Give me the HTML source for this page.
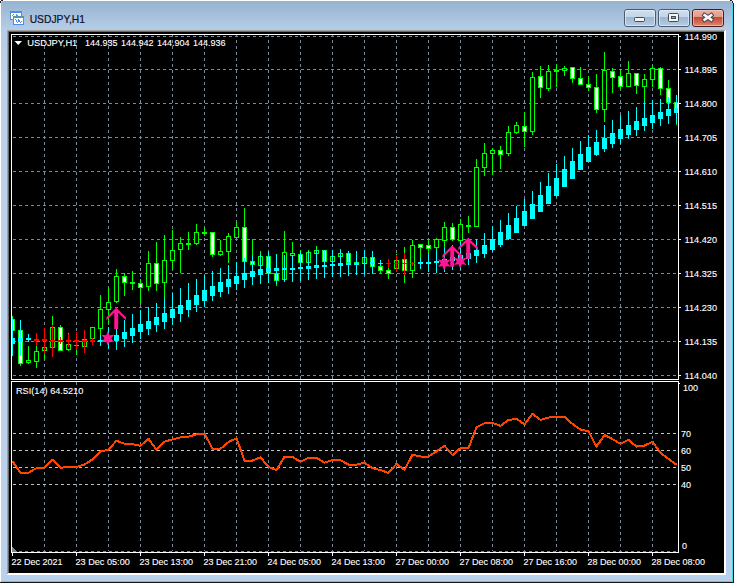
<!DOCTYPE html>
<html><head><meta charset="utf-8"><style>
html,body{margin:0;padding:0;width:736px;height:583px;overflow:hidden;background:#fff;}
svg{display:block;}
</style></head><body>
<svg width="736" height="583" viewBox="0 0 736 583" shape-rendering="crispEdges">
<defs>
<linearGradient id="gbg" x1="0" y1="1" x2="0" y2="70" gradientUnits="userSpaceOnUse">
<stop offset="0" stop-color="#98b3d0"/><stop offset="0.4" stop-color="#b4cce6"/><stop offset="1" stop-color="#b9d1ea"/>
</linearGradient>
<linearGradient id="gmin" x1="0" y1="0" x2="0" y2="1">
<stop offset="0" stop-color="#d2e0ef"/><stop offset="0.45" stop-color="#c3d5e9"/><stop offset="0.46" stop-color="#9db6d1"/><stop offset="1" stop-color="#b7cde6"/>
</linearGradient>
<linearGradient id="gclose" x1="0" y1="0" x2="0" y2="1">
<stop offset="0" stop-color="#eeb1a3"/><stop offset="0.45" stop-color="#e39a88"/><stop offset="0.46" stop-color="#c4492d"/><stop offset="1" stop-color="#dc8a74"/>
</linearGradient>
<clipPath id="cmain"><rect x="12" y="35" width="666" height="344"/></clipPath>
<clipPath id="crsi"><rect x="12" y="382" width="666" height="170"/></clipPath>
</defs>
<rect x="0" y="0" width="736" height="583" fill="#ffffff"/>
<rect x="1" y="1" width="731" height="581" fill="url(#gbg)"/>
<rect x="732" y="3" width="1" height="579" fill="#3fd6f2"/>
<rect x="1" y="581" width="732" height="1" fill="#3fd6f2"/>
<rect x="733" y="3" width="1" height="580" fill="#141414"/>
<rect x="0" y="582" width="734" height="1" fill="#141414"/>
<rect x="0" y="1" width="1" height="2" fill="#222"/>
<rect x="1" y="0" width="2" height="1" fill="#222"/>
<rect x="1" y="1" width="1" height="1" fill="#e8f0f8"/>
<rect x="730" y="0" width="2" height="1" fill="#222"/>
<rect x="732" y="1" width="1" height="2" fill="#222"/>
<rect x="731" y="1" width="1" height="1" fill="#c8f0ff"/>
<!-- sunken border -->
<rect x="7" y="30" width="719" height="545" fill="#ffffff"/>
<rect x="7" y="30" width="718" height="1" fill="#a0a0a0"/>
<rect x="7" y="30" width="1" height="544" fill="#a0a0a0"/>
<rect x="8" y="31" width="716" height="1" fill="#696969"/>
<rect x="8" y="31" width="1" height="542" fill="#696969"/>
<rect x="9" y="32" width="715" height="541" fill="#000"/>
<path d="M13 36h3v1h-3zM19 36h3v1h-3zM25 36h3v1h-3zM31 36h3v1h-3zM37 36h3v1h-3zM43 36h3v1h-3zM49 36h3v1h-3zM55 36h3v1h-3zM61 36h3v1h-3zM67 36h3v1h-3zM73 36h3v1h-3zM79 36h3v1h-3zM85 36h3v1h-3zM91 36h3v1h-3zM97 36h3v1h-3zM103 36h3v1h-3zM109 36h3v1h-3zM115 36h3v1h-3zM121 36h3v1h-3zM127 36h3v1h-3zM133 36h3v1h-3zM139 36h3v1h-3zM145 36h3v1h-3zM151 36h3v1h-3zM157 36h3v1h-3zM163 36h3v1h-3zM169 36h3v1h-3zM175 36h3v1h-3zM181 36h3v1h-3zM187 36h3v1h-3zM193 36h3v1h-3zM199 36h3v1h-3zM205 36h3v1h-3zM211 36h3v1h-3zM217 36h3v1h-3zM223 36h3v1h-3zM229 36h3v1h-3zM235 36h3v1h-3zM241 36h3v1h-3zM247 36h3v1h-3zM253 36h3v1h-3zM259 36h3v1h-3zM265 36h3v1h-3zM271 36h3v1h-3zM277 36h3v1h-3zM283 36h3v1h-3zM289 36h3v1h-3zM295 36h3v1h-3zM301 36h3v1h-3zM307 36h3v1h-3zM313 36h3v1h-3zM319 36h3v1h-3zM325 36h3v1h-3zM331 36h3v1h-3zM337 36h3v1h-3zM343 36h3v1h-3zM349 36h3v1h-3zM355 36h3v1h-3zM361 36h3v1h-3zM367 36h3v1h-3zM373 36h3v1h-3zM379 36h3v1h-3zM385 36h3v1h-3zM391 36h3v1h-3zM397 36h3v1h-3zM403 36h3v1h-3zM409 36h3v1h-3zM415 36h3v1h-3zM421 36h3v1h-3zM427 36h3v1h-3zM433 36h3v1h-3zM439 36h3v1h-3zM445 36h3v1h-3zM451 36h3v1h-3zM457 36h3v1h-3zM463 36h3v1h-3zM469 36h3v1h-3zM475 36h3v1h-3zM481 36h3v1h-3zM487 36h3v1h-3zM493 36h3v1h-3zM499 36h3v1h-3zM505 36h3v1h-3zM511 36h3v1h-3zM517 36h3v1h-3zM523 36h3v1h-3zM529 36h3v1h-3zM535 36h3v1h-3zM541 36h3v1h-3zM547 36h3v1h-3zM553 36h3v1h-3zM559 36h3v1h-3zM565 36h3v1h-3zM571 36h3v1h-3zM577 36h3v1h-3zM583 36h3v1h-3zM589 36h3v1h-3zM595 36h3v1h-3zM601 36h3v1h-3zM607 36h3v1h-3zM613 36h3v1h-3zM619 36h3v1h-3zM625 36h3v1h-3zM631 36h3v1h-3zM637 36h3v1h-3zM643 36h3v1h-3zM649 36h3v1h-3zM655 36h3v1h-3zM661 36h3v1h-3zM667 36h3v1h-3zM673 36h3v1h-3zM13 69h3v1h-3zM19 69h3v1h-3zM25 69h3v1h-3zM31 69h3v1h-3zM37 69h3v1h-3zM43 69h3v1h-3zM49 69h3v1h-3zM55 69h3v1h-3zM61 69h3v1h-3zM67 69h3v1h-3zM73 69h3v1h-3zM79 69h3v1h-3zM85 69h3v1h-3zM91 69h3v1h-3zM97 69h3v1h-3zM103 69h3v1h-3zM109 69h3v1h-3zM115 69h3v1h-3zM121 69h3v1h-3zM127 69h3v1h-3zM133 69h3v1h-3zM139 69h3v1h-3zM145 69h3v1h-3zM151 69h3v1h-3zM157 69h3v1h-3zM163 69h3v1h-3zM169 69h3v1h-3zM175 69h3v1h-3zM181 69h3v1h-3zM187 69h3v1h-3zM193 69h3v1h-3zM199 69h3v1h-3zM205 69h3v1h-3zM211 69h3v1h-3zM217 69h3v1h-3zM223 69h3v1h-3zM229 69h3v1h-3zM235 69h3v1h-3zM241 69h3v1h-3zM247 69h3v1h-3zM253 69h3v1h-3zM259 69h3v1h-3zM265 69h3v1h-3zM271 69h3v1h-3zM277 69h3v1h-3zM283 69h3v1h-3zM289 69h3v1h-3zM295 69h3v1h-3zM301 69h3v1h-3zM307 69h3v1h-3zM313 69h3v1h-3zM319 69h3v1h-3zM325 69h3v1h-3zM331 69h3v1h-3zM337 69h3v1h-3zM343 69h3v1h-3zM349 69h3v1h-3zM355 69h3v1h-3zM361 69h3v1h-3zM367 69h3v1h-3zM373 69h3v1h-3zM379 69h3v1h-3zM385 69h3v1h-3zM391 69h3v1h-3zM397 69h3v1h-3zM403 69h3v1h-3zM409 69h3v1h-3zM415 69h3v1h-3zM421 69h3v1h-3zM427 69h3v1h-3zM433 69h3v1h-3zM439 69h3v1h-3zM445 69h3v1h-3zM451 69h3v1h-3zM457 69h3v1h-3zM463 69h3v1h-3zM469 69h3v1h-3zM475 69h3v1h-3zM481 69h3v1h-3zM487 69h3v1h-3zM493 69h3v1h-3zM499 69h3v1h-3zM505 69h3v1h-3zM511 69h3v1h-3zM517 69h3v1h-3zM523 69h3v1h-3zM529 69h3v1h-3zM535 69h3v1h-3zM541 69h3v1h-3zM547 69h3v1h-3zM553 69h3v1h-3zM559 69h3v1h-3zM565 69h3v1h-3zM571 69h3v1h-3zM577 69h3v1h-3zM583 69h3v1h-3zM589 69h3v1h-3zM595 69h3v1h-3zM601 69h3v1h-3zM607 69h3v1h-3zM613 69h3v1h-3zM619 69h3v1h-3zM625 69h3v1h-3zM631 69h3v1h-3zM637 69h3v1h-3zM643 69h3v1h-3zM649 69h3v1h-3zM655 69h3v1h-3zM661 69h3v1h-3zM667 69h3v1h-3zM673 69h3v1h-3zM13 103h3v1h-3zM19 103h3v1h-3zM25 103h3v1h-3zM31 103h3v1h-3zM37 103h3v1h-3zM43 103h3v1h-3zM49 103h3v1h-3zM55 103h3v1h-3zM61 103h3v1h-3zM67 103h3v1h-3zM73 103h3v1h-3zM79 103h3v1h-3zM85 103h3v1h-3zM91 103h3v1h-3zM97 103h3v1h-3zM103 103h3v1h-3zM109 103h3v1h-3zM115 103h3v1h-3zM121 103h3v1h-3zM127 103h3v1h-3zM133 103h3v1h-3zM139 103h3v1h-3zM145 103h3v1h-3zM151 103h3v1h-3zM157 103h3v1h-3zM163 103h3v1h-3zM169 103h3v1h-3zM175 103h3v1h-3zM181 103h3v1h-3zM187 103h3v1h-3zM193 103h3v1h-3zM199 103h3v1h-3zM205 103h3v1h-3zM211 103h3v1h-3zM217 103h3v1h-3zM223 103h3v1h-3zM229 103h3v1h-3zM235 103h3v1h-3zM241 103h3v1h-3zM247 103h3v1h-3zM253 103h3v1h-3zM259 103h3v1h-3zM265 103h3v1h-3zM271 103h3v1h-3zM277 103h3v1h-3zM283 103h3v1h-3zM289 103h3v1h-3zM295 103h3v1h-3zM301 103h3v1h-3zM307 103h3v1h-3zM313 103h3v1h-3zM319 103h3v1h-3zM325 103h3v1h-3zM331 103h3v1h-3zM337 103h3v1h-3zM343 103h3v1h-3zM349 103h3v1h-3zM355 103h3v1h-3zM361 103h3v1h-3zM367 103h3v1h-3zM373 103h3v1h-3zM379 103h3v1h-3zM385 103h3v1h-3zM391 103h3v1h-3zM397 103h3v1h-3zM403 103h3v1h-3zM409 103h3v1h-3zM415 103h3v1h-3zM421 103h3v1h-3zM427 103h3v1h-3zM433 103h3v1h-3zM439 103h3v1h-3zM445 103h3v1h-3zM451 103h3v1h-3zM457 103h3v1h-3zM463 103h3v1h-3zM469 103h3v1h-3zM475 103h3v1h-3zM481 103h3v1h-3zM487 103h3v1h-3zM493 103h3v1h-3zM499 103h3v1h-3zM505 103h3v1h-3zM511 103h3v1h-3zM517 103h3v1h-3zM523 103h3v1h-3zM529 103h3v1h-3zM535 103h3v1h-3zM541 103h3v1h-3zM547 103h3v1h-3zM553 103h3v1h-3zM559 103h3v1h-3zM565 103h3v1h-3zM571 103h3v1h-3zM577 103h3v1h-3zM583 103h3v1h-3zM589 103h3v1h-3zM595 103h3v1h-3zM601 103h3v1h-3zM607 103h3v1h-3zM613 103h3v1h-3zM619 103h3v1h-3zM625 103h3v1h-3zM631 103h3v1h-3zM637 103h3v1h-3zM643 103h3v1h-3zM649 103h3v1h-3zM655 103h3v1h-3zM661 103h3v1h-3zM667 103h3v1h-3zM673 103h3v1h-3zM13 137h3v1h-3zM19 137h3v1h-3zM25 137h3v1h-3zM31 137h3v1h-3zM37 137h3v1h-3zM43 137h3v1h-3zM49 137h3v1h-3zM55 137h3v1h-3zM61 137h3v1h-3zM67 137h3v1h-3zM73 137h3v1h-3zM79 137h3v1h-3zM85 137h3v1h-3zM91 137h3v1h-3zM97 137h3v1h-3zM103 137h3v1h-3zM109 137h3v1h-3zM115 137h3v1h-3zM121 137h3v1h-3zM127 137h3v1h-3zM133 137h3v1h-3zM139 137h3v1h-3zM145 137h3v1h-3zM151 137h3v1h-3zM157 137h3v1h-3zM163 137h3v1h-3zM169 137h3v1h-3zM175 137h3v1h-3zM181 137h3v1h-3zM187 137h3v1h-3zM193 137h3v1h-3zM199 137h3v1h-3zM205 137h3v1h-3zM211 137h3v1h-3zM217 137h3v1h-3zM223 137h3v1h-3zM229 137h3v1h-3zM235 137h3v1h-3zM241 137h3v1h-3zM247 137h3v1h-3zM253 137h3v1h-3zM259 137h3v1h-3zM265 137h3v1h-3zM271 137h3v1h-3zM277 137h3v1h-3zM283 137h3v1h-3zM289 137h3v1h-3zM295 137h3v1h-3zM301 137h3v1h-3zM307 137h3v1h-3zM313 137h3v1h-3zM319 137h3v1h-3zM325 137h3v1h-3zM331 137h3v1h-3zM337 137h3v1h-3zM343 137h3v1h-3zM349 137h3v1h-3zM355 137h3v1h-3zM361 137h3v1h-3zM367 137h3v1h-3zM373 137h3v1h-3zM379 137h3v1h-3zM385 137h3v1h-3zM391 137h3v1h-3zM397 137h3v1h-3zM403 137h3v1h-3zM409 137h3v1h-3zM415 137h3v1h-3zM421 137h3v1h-3zM427 137h3v1h-3zM433 137h3v1h-3zM439 137h3v1h-3zM445 137h3v1h-3zM451 137h3v1h-3zM457 137h3v1h-3zM463 137h3v1h-3zM469 137h3v1h-3zM475 137h3v1h-3zM481 137h3v1h-3zM487 137h3v1h-3zM493 137h3v1h-3zM499 137h3v1h-3zM505 137h3v1h-3zM511 137h3v1h-3zM517 137h3v1h-3zM523 137h3v1h-3zM529 137h3v1h-3zM535 137h3v1h-3zM541 137h3v1h-3zM547 137h3v1h-3zM553 137h3v1h-3zM559 137h3v1h-3zM565 137h3v1h-3zM571 137h3v1h-3zM577 137h3v1h-3zM583 137h3v1h-3zM589 137h3v1h-3zM595 137h3v1h-3zM601 137h3v1h-3zM607 137h3v1h-3zM613 137h3v1h-3zM619 137h3v1h-3zM625 137h3v1h-3zM631 137h3v1h-3zM637 137h3v1h-3zM643 137h3v1h-3zM649 137h3v1h-3zM655 137h3v1h-3zM661 137h3v1h-3zM667 137h3v1h-3zM673 137h3v1h-3zM13 171h3v1h-3zM19 171h3v1h-3zM25 171h3v1h-3zM31 171h3v1h-3zM37 171h3v1h-3zM43 171h3v1h-3zM49 171h3v1h-3zM55 171h3v1h-3zM61 171h3v1h-3zM67 171h3v1h-3zM73 171h3v1h-3zM79 171h3v1h-3zM85 171h3v1h-3zM91 171h3v1h-3zM97 171h3v1h-3zM103 171h3v1h-3zM109 171h3v1h-3zM115 171h3v1h-3zM121 171h3v1h-3zM127 171h3v1h-3zM133 171h3v1h-3zM139 171h3v1h-3zM145 171h3v1h-3zM151 171h3v1h-3zM157 171h3v1h-3zM163 171h3v1h-3zM169 171h3v1h-3zM175 171h3v1h-3zM181 171h3v1h-3zM187 171h3v1h-3zM193 171h3v1h-3zM199 171h3v1h-3zM205 171h3v1h-3zM211 171h3v1h-3zM217 171h3v1h-3zM223 171h3v1h-3zM229 171h3v1h-3zM235 171h3v1h-3zM241 171h3v1h-3zM247 171h3v1h-3zM253 171h3v1h-3zM259 171h3v1h-3zM265 171h3v1h-3zM271 171h3v1h-3zM277 171h3v1h-3zM283 171h3v1h-3zM289 171h3v1h-3zM295 171h3v1h-3zM301 171h3v1h-3zM307 171h3v1h-3zM313 171h3v1h-3zM319 171h3v1h-3zM325 171h3v1h-3zM331 171h3v1h-3zM337 171h3v1h-3zM343 171h3v1h-3zM349 171h3v1h-3zM355 171h3v1h-3zM361 171h3v1h-3zM367 171h3v1h-3zM373 171h3v1h-3zM379 171h3v1h-3zM385 171h3v1h-3zM391 171h3v1h-3zM397 171h3v1h-3zM403 171h3v1h-3zM409 171h3v1h-3zM415 171h3v1h-3zM421 171h3v1h-3zM427 171h3v1h-3zM433 171h3v1h-3zM439 171h3v1h-3zM445 171h3v1h-3zM451 171h3v1h-3zM457 171h3v1h-3zM463 171h3v1h-3zM469 171h3v1h-3zM475 171h3v1h-3zM481 171h3v1h-3zM487 171h3v1h-3zM493 171h3v1h-3zM499 171h3v1h-3zM505 171h3v1h-3zM511 171h3v1h-3zM517 171h3v1h-3zM523 171h3v1h-3zM529 171h3v1h-3zM535 171h3v1h-3zM541 171h3v1h-3zM547 171h3v1h-3zM553 171h3v1h-3zM559 171h3v1h-3zM565 171h3v1h-3zM571 171h3v1h-3zM577 171h3v1h-3zM583 171h3v1h-3zM589 171h3v1h-3zM595 171h3v1h-3zM601 171h3v1h-3zM607 171h3v1h-3zM613 171h3v1h-3zM619 171h3v1h-3zM625 171h3v1h-3zM631 171h3v1h-3zM637 171h3v1h-3zM643 171h3v1h-3zM649 171h3v1h-3zM655 171h3v1h-3zM661 171h3v1h-3zM667 171h3v1h-3zM673 171h3v1h-3zM13 205h3v1h-3zM19 205h3v1h-3zM25 205h3v1h-3zM31 205h3v1h-3zM37 205h3v1h-3zM43 205h3v1h-3zM49 205h3v1h-3zM55 205h3v1h-3zM61 205h3v1h-3zM67 205h3v1h-3zM73 205h3v1h-3zM79 205h3v1h-3zM85 205h3v1h-3zM91 205h3v1h-3zM97 205h3v1h-3zM103 205h3v1h-3zM109 205h3v1h-3zM115 205h3v1h-3zM121 205h3v1h-3zM127 205h3v1h-3zM133 205h3v1h-3zM139 205h3v1h-3zM145 205h3v1h-3zM151 205h3v1h-3zM157 205h3v1h-3zM163 205h3v1h-3zM169 205h3v1h-3zM175 205h3v1h-3zM181 205h3v1h-3zM187 205h3v1h-3zM193 205h3v1h-3zM199 205h3v1h-3zM205 205h3v1h-3zM211 205h3v1h-3zM217 205h3v1h-3zM223 205h3v1h-3zM229 205h3v1h-3zM235 205h3v1h-3zM241 205h3v1h-3zM247 205h3v1h-3zM253 205h3v1h-3zM259 205h3v1h-3zM265 205h3v1h-3zM271 205h3v1h-3zM277 205h3v1h-3zM283 205h3v1h-3zM289 205h3v1h-3zM295 205h3v1h-3zM301 205h3v1h-3zM307 205h3v1h-3zM313 205h3v1h-3zM319 205h3v1h-3zM325 205h3v1h-3zM331 205h3v1h-3zM337 205h3v1h-3zM343 205h3v1h-3zM349 205h3v1h-3zM355 205h3v1h-3zM361 205h3v1h-3zM367 205h3v1h-3zM373 205h3v1h-3zM379 205h3v1h-3zM385 205h3v1h-3zM391 205h3v1h-3zM397 205h3v1h-3zM403 205h3v1h-3zM409 205h3v1h-3zM415 205h3v1h-3zM421 205h3v1h-3zM427 205h3v1h-3zM433 205h3v1h-3zM439 205h3v1h-3zM445 205h3v1h-3zM451 205h3v1h-3zM457 205h3v1h-3zM463 205h3v1h-3zM469 205h3v1h-3zM475 205h3v1h-3zM481 205h3v1h-3zM487 205h3v1h-3zM493 205h3v1h-3zM499 205h3v1h-3zM505 205h3v1h-3zM511 205h3v1h-3zM517 205h3v1h-3zM523 205h3v1h-3zM529 205h3v1h-3zM535 205h3v1h-3zM541 205h3v1h-3zM547 205h3v1h-3zM553 205h3v1h-3zM559 205h3v1h-3zM565 205h3v1h-3zM571 205h3v1h-3zM577 205h3v1h-3zM583 205h3v1h-3zM589 205h3v1h-3zM595 205h3v1h-3zM601 205h3v1h-3zM607 205h3v1h-3zM613 205h3v1h-3zM619 205h3v1h-3zM625 205h3v1h-3zM631 205h3v1h-3zM637 205h3v1h-3zM643 205h3v1h-3zM649 205h3v1h-3zM655 205h3v1h-3zM661 205h3v1h-3zM667 205h3v1h-3zM673 205h3v1h-3zM13 239h3v1h-3zM19 239h3v1h-3zM25 239h3v1h-3zM31 239h3v1h-3zM37 239h3v1h-3zM43 239h3v1h-3zM49 239h3v1h-3zM55 239h3v1h-3zM61 239h3v1h-3zM67 239h3v1h-3zM73 239h3v1h-3zM79 239h3v1h-3zM85 239h3v1h-3zM91 239h3v1h-3zM97 239h3v1h-3zM103 239h3v1h-3zM109 239h3v1h-3zM115 239h3v1h-3zM121 239h3v1h-3zM127 239h3v1h-3zM133 239h3v1h-3zM139 239h3v1h-3zM145 239h3v1h-3zM151 239h3v1h-3zM157 239h3v1h-3zM163 239h3v1h-3zM169 239h3v1h-3zM175 239h3v1h-3zM181 239h3v1h-3zM187 239h3v1h-3zM193 239h3v1h-3zM199 239h3v1h-3zM205 239h3v1h-3zM211 239h3v1h-3zM217 239h3v1h-3zM223 239h3v1h-3zM229 239h3v1h-3zM235 239h3v1h-3zM241 239h3v1h-3zM247 239h3v1h-3zM253 239h3v1h-3zM259 239h3v1h-3zM265 239h3v1h-3zM271 239h3v1h-3zM277 239h3v1h-3zM283 239h3v1h-3zM289 239h3v1h-3zM295 239h3v1h-3zM301 239h3v1h-3zM307 239h3v1h-3zM313 239h3v1h-3zM319 239h3v1h-3zM325 239h3v1h-3zM331 239h3v1h-3zM337 239h3v1h-3zM343 239h3v1h-3zM349 239h3v1h-3zM355 239h3v1h-3zM361 239h3v1h-3zM367 239h3v1h-3zM373 239h3v1h-3zM379 239h3v1h-3zM385 239h3v1h-3zM391 239h3v1h-3zM397 239h3v1h-3zM403 239h3v1h-3zM409 239h3v1h-3zM415 239h3v1h-3zM421 239h3v1h-3zM427 239h3v1h-3zM433 239h3v1h-3zM439 239h3v1h-3zM445 239h3v1h-3zM451 239h3v1h-3zM457 239h3v1h-3zM463 239h3v1h-3zM469 239h3v1h-3zM475 239h3v1h-3zM481 239h3v1h-3zM487 239h3v1h-3zM493 239h3v1h-3zM499 239h3v1h-3zM505 239h3v1h-3zM511 239h3v1h-3zM517 239h3v1h-3zM523 239h3v1h-3zM529 239h3v1h-3zM535 239h3v1h-3zM541 239h3v1h-3zM547 239h3v1h-3zM553 239h3v1h-3zM559 239h3v1h-3zM565 239h3v1h-3zM571 239h3v1h-3zM577 239h3v1h-3zM583 239h3v1h-3zM589 239h3v1h-3zM595 239h3v1h-3zM601 239h3v1h-3zM607 239h3v1h-3zM613 239h3v1h-3zM619 239h3v1h-3zM625 239h3v1h-3zM631 239h3v1h-3zM637 239h3v1h-3zM643 239h3v1h-3zM649 239h3v1h-3zM655 239h3v1h-3zM661 239h3v1h-3zM667 239h3v1h-3zM673 239h3v1h-3zM13 273h3v1h-3zM19 273h3v1h-3zM25 273h3v1h-3zM31 273h3v1h-3zM37 273h3v1h-3zM43 273h3v1h-3zM49 273h3v1h-3zM55 273h3v1h-3zM61 273h3v1h-3zM67 273h3v1h-3zM73 273h3v1h-3zM79 273h3v1h-3zM85 273h3v1h-3zM91 273h3v1h-3zM97 273h3v1h-3zM103 273h3v1h-3zM109 273h3v1h-3zM115 273h3v1h-3zM121 273h3v1h-3zM127 273h3v1h-3zM133 273h3v1h-3zM139 273h3v1h-3zM145 273h3v1h-3zM151 273h3v1h-3zM157 273h3v1h-3zM163 273h3v1h-3zM169 273h3v1h-3zM175 273h3v1h-3zM181 273h3v1h-3zM187 273h3v1h-3zM193 273h3v1h-3zM199 273h3v1h-3zM205 273h3v1h-3zM211 273h3v1h-3zM217 273h3v1h-3zM223 273h3v1h-3zM229 273h3v1h-3zM235 273h3v1h-3zM241 273h3v1h-3zM247 273h3v1h-3zM253 273h3v1h-3zM259 273h3v1h-3zM265 273h3v1h-3zM271 273h3v1h-3zM277 273h3v1h-3zM283 273h3v1h-3zM289 273h3v1h-3zM295 273h3v1h-3zM301 273h3v1h-3zM307 273h3v1h-3zM313 273h3v1h-3zM319 273h3v1h-3zM325 273h3v1h-3zM331 273h3v1h-3zM337 273h3v1h-3zM343 273h3v1h-3zM349 273h3v1h-3zM355 273h3v1h-3zM361 273h3v1h-3zM367 273h3v1h-3zM373 273h3v1h-3zM379 273h3v1h-3zM385 273h3v1h-3zM391 273h3v1h-3zM397 273h3v1h-3zM403 273h3v1h-3zM409 273h3v1h-3zM415 273h3v1h-3zM421 273h3v1h-3zM427 273h3v1h-3zM433 273h3v1h-3zM439 273h3v1h-3zM445 273h3v1h-3zM451 273h3v1h-3zM457 273h3v1h-3zM463 273h3v1h-3zM469 273h3v1h-3zM475 273h3v1h-3zM481 273h3v1h-3zM487 273h3v1h-3zM493 273h3v1h-3zM499 273h3v1h-3zM505 273h3v1h-3zM511 273h3v1h-3zM517 273h3v1h-3zM523 273h3v1h-3zM529 273h3v1h-3zM535 273h3v1h-3zM541 273h3v1h-3zM547 273h3v1h-3zM553 273h3v1h-3zM559 273h3v1h-3zM565 273h3v1h-3zM571 273h3v1h-3zM577 273h3v1h-3zM583 273h3v1h-3zM589 273h3v1h-3zM595 273h3v1h-3zM601 273h3v1h-3zM607 273h3v1h-3zM613 273h3v1h-3zM619 273h3v1h-3zM625 273h3v1h-3zM631 273h3v1h-3zM637 273h3v1h-3zM643 273h3v1h-3zM649 273h3v1h-3zM655 273h3v1h-3zM661 273h3v1h-3zM667 273h3v1h-3zM673 273h3v1h-3zM13 307h3v1h-3zM19 307h3v1h-3zM25 307h3v1h-3zM31 307h3v1h-3zM37 307h3v1h-3zM43 307h3v1h-3zM49 307h3v1h-3zM55 307h3v1h-3zM61 307h3v1h-3zM67 307h3v1h-3zM73 307h3v1h-3zM79 307h3v1h-3zM85 307h3v1h-3zM91 307h3v1h-3zM97 307h3v1h-3zM103 307h3v1h-3zM109 307h3v1h-3zM115 307h3v1h-3zM121 307h3v1h-3zM127 307h3v1h-3zM133 307h3v1h-3zM139 307h3v1h-3zM145 307h3v1h-3zM151 307h3v1h-3zM157 307h3v1h-3zM163 307h3v1h-3zM169 307h3v1h-3zM175 307h3v1h-3zM181 307h3v1h-3zM187 307h3v1h-3zM193 307h3v1h-3zM199 307h3v1h-3zM205 307h3v1h-3zM211 307h3v1h-3zM217 307h3v1h-3zM223 307h3v1h-3zM229 307h3v1h-3zM235 307h3v1h-3zM241 307h3v1h-3zM247 307h3v1h-3zM253 307h3v1h-3zM259 307h3v1h-3zM265 307h3v1h-3zM271 307h3v1h-3zM277 307h3v1h-3zM283 307h3v1h-3zM289 307h3v1h-3zM295 307h3v1h-3zM301 307h3v1h-3zM307 307h3v1h-3zM313 307h3v1h-3zM319 307h3v1h-3zM325 307h3v1h-3zM331 307h3v1h-3zM337 307h3v1h-3zM343 307h3v1h-3zM349 307h3v1h-3zM355 307h3v1h-3zM361 307h3v1h-3zM367 307h3v1h-3zM373 307h3v1h-3zM379 307h3v1h-3zM385 307h3v1h-3zM391 307h3v1h-3zM397 307h3v1h-3zM403 307h3v1h-3zM409 307h3v1h-3zM415 307h3v1h-3zM421 307h3v1h-3zM427 307h3v1h-3zM433 307h3v1h-3zM439 307h3v1h-3zM445 307h3v1h-3zM451 307h3v1h-3zM457 307h3v1h-3zM463 307h3v1h-3zM469 307h3v1h-3zM475 307h3v1h-3zM481 307h3v1h-3zM487 307h3v1h-3zM493 307h3v1h-3zM499 307h3v1h-3zM505 307h3v1h-3zM511 307h3v1h-3zM517 307h3v1h-3zM523 307h3v1h-3zM529 307h3v1h-3zM535 307h3v1h-3zM541 307h3v1h-3zM547 307h3v1h-3zM553 307h3v1h-3zM559 307h3v1h-3zM565 307h3v1h-3zM571 307h3v1h-3zM577 307h3v1h-3zM583 307h3v1h-3zM589 307h3v1h-3zM595 307h3v1h-3zM601 307h3v1h-3zM607 307h3v1h-3zM613 307h3v1h-3zM619 307h3v1h-3zM625 307h3v1h-3zM631 307h3v1h-3zM637 307h3v1h-3zM643 307h3v1h-3zM649 307h3v1h-3zM655 307h3v1h-3zM661 307h3v1h-3zM667 307h3v1h-3zM673 307h3v1h-3zM13 341h3v1h-3zM19 341h3v1h-3zM25 341h3v1h-3zM31 341h3v1h-3zM37 341h3v1h-3zM43 341h3v1h-3zM49 341h3v1h-3zM55 341h3v1h-3zM61 341h3v1h-3zM67 341h3v1h-3zM73 341h3v1h-3zM79 341h3v1h-3zM85 341h3v1h-3zM91 341h3v1h-3zM97 341h3v1h-3zM103 341h3v1h-3zM109 341h3v1h-3zM115 341h3v1h-3zM121 341h3v1h-3zM127 341h3v1h-3zM133 341h3v1h-3zM139 341h3v1h-3zM145 341h3v1h-3zM151 341h3v1h-3zM157 341h3v1h-3zM163 341h3v1h-3zM169 341h3v1h-3zM175 341h3v1h-3zM181 341h3v1h-3zM187 341h3v1h-3zM193 341h3v1h-3zM199 341h3v1h-3zM205 341h3v1h-3zM211 341h3v1h-3zM217 341h3v1h-3zM223 341h3v1h-3zM229 341h3v1h-3zM235 341h3v1h-3zM241 341h3v1h-3zM247 341h3v1h-3zM253 341h3v1h-3zM259 341h3v1h-3zM265 341h3v1h-3zM271 341h3v1h-3zM277 341h3v1h-3zM283 341h3v1h-3zM289 341h3v1h-3zM295 341h3v1h-3zM301 341h3v1h-3zM307 341h3v1h-3zM313 341h3v1h-3zM319 341h3v1h-3zM325 341h3v1h-3zM331 341h3v1h-3zM337 341h3v1h-3zM343 341h3v1h-3zM349 341h3v1h-3zM355 341h3v1h-3zM361 341h3v1h-3zM367 341h3v1h-3zM373 341h3v1h-3zM379 341h3v1h-3zM385 341h3v1h-3zM391 341h3v1h-3zM397 341h3v1h-3zM403 341h3v1h-3zM409 341h3v1h-3zM415 341h3v1h-3zM421 341h3v1h-3zM427 341h3v1h-3zM433 341h3v1h-3zM439 341h3v1h-3zM445 341h3v1h-3zM451 341h3v1h-3zM457 341h3v1h-3zM463 341h3v1h-3zM469 341h3v1h-3zM475 341h3v1h-3zM481 341h3v1h-3zM487 341h3v1h-3zM493 341h3v1h-3zM499 341h3v1h-3zM505 341h3v1h-3zM511 341h3v1h-3zM517 341h3v1h-3zM523 341h3v1h-3zM529 341h3v1h-3zM535 341h3v1h-3zM541 341h3v1h-3zM547 341h3v1h-3zM553 341h3v1h-3zM559 341h3v1h-3zM565 341h3v1h-3zM571 341h3v1h-3zM577 341h3v1h-3zM583 341h3v1h-3zM589 341h3v1h-3zM595 341h3v1h-3zM601 341h3v1h-3zM607 341h3v1h-3zM613 341h3v1h-3zM619 341h3v1h-3zM625 341h3v1h-3zM631 341h3v1h-3zM637 341h3v1h-3zM643 341h3v1h-3zM649 341h3v1h-3zM655 341h3v1h-3zM661 341h3v1h-3zM667 341h3v1h-3zM673 341h3v1h-3zM13 375h3v1h-3zM19 375h3v1h-3zM25 375h3v1h-3zM31 375h3v1h-3zM37 375h3v1h-3zM43 375h3v1h-3zM49 375h3v1h-3zM55 375h3v1h-3zM61 375h3v1h-3zM67 375h3v1h-3zM73 375h3v1h-3zM79 375h3v1h-3zM85 375h3v1h-3zM91 375h3v1h-3zM97 375h3v1h-3zM103 375h3v1h-3zM109 375h3v1h-3zM115 375h3v1h-3zM121 375h3v1h-3zM127 375h3v1h-3zM133 375h3v1h-3zM139 375h3v1h-3zM145 375h3v1h-3zM151 375h3v1h-3zM157 375h3v1h-3zM163 375h3v1h-3zM169 375h3v1h-3zM175 375h3v1h-3zM181 375h3v1h-3zM187 375h3v1h-3zM193 375h3v1h-3zM199 375h3v1h-3zM205 375h3v1h-3zM211 375h3v1h-3zM217 375h3v1h-3zM223 375h3v1h-3zM229 375h3v1h-3zM235 375h3v1h-3zM241 375h3v1h-3zM247 375h3v1h-3zM253 375h3v1h-3zM259 375h3v1h-3zM265 375h3v1h-3zM271 375h3v1h-3zM277 375h3v1h-3zM283 375h3v1h-3zM289 375h3v1h-3zM295 375h3v1h-3zM301 375h3v1h-3zM307 375h3v1h-3zM313 375h3v1h-3zM319 375h3v1h-3zM325 375h3v1h-3zM331 375h3v1h-3zM337 375h3v1h-3zM343 375h3v1h-3zM349 375h3v1h-3zM355 375h3v1h-3zM361 375h3v1h-3zM367 375h3v1h-3zM373 375h3v1h-3zM379 375h3v1h-3zM385 375h3v1h-3zM391 375h3v1h-3zM397 375h3v1h-3zM403 375h3v1h-3zM409 375h3v1h-3zM415 375h3v1h-3zM421 375h3v1h-3zM427 375h3v1h-3zM433 375h3v1h-3zM439 375h3v1h-3zM445 375h3v1h-3zM451 375h3v1h-3zM457 375h3v1h-3zM463 375h3v1h-3zM469 375h3v1h-3zM475 375h3v1h-3zM481 375h3v1h-3zM487 375h3v1h-3zM493 375h3v1h-3zM499 375h3v1h-3zM505 375h3v1h-3zM511 375h3v1h-3zM517 375h3v1h-3zM523 375h3v1h-3zM529 375h3v1h-3zM535 375h3v1h-3zM541 375h3v1h-3zM547 375h3v1h-3zM553 375h3v1h-3zM559 375h3v1h-3zM565 375h3v1h-3zM571 375h3v1h-3zM577 375h3v1h-3zM583 375h3v1h-3zM589 375h3v1h-3zM595 375h3v1h-3zM601 375h3v1h-3zM607 375h3v1h-3zM613 375h3v1h-3zM619 375h3v1h-3zM625 375h3v1h-3zM631 375h3v1h-3zM637 375h3v1h-3zM643 375h3v1h-3zM649 375h3v1h-3zM655 375h3v1h-3zM661 375h3v1h-3zM667 375h3v1h-3zM673 375h3v1h-3zM13 551h3v1h-3zM19 551h3v1h-3zM25 551h3v1h-3zM31 551h3v1h-3zM37 551h3v1h-3zM43 551h3v1h-3zM49 551h3v1h-3zM55 551h3v1h-3zM61 551h3v1h-3zM67 551h3v1h-3zM73 551h3v1h-3zM79 551h3v1h-3zM85 551h3v1h-3zM91 551h3v1h-3zM97 551h3v1h-3zM103 551h3v1h-3zM109 551h3v1h-3zM115 551h3v1h-3zM121 551h3v1h-3zM127 551h3v1h-3zM133 551h3v1h-3zM139 551h3v1h-3zM145 551h3v1h-3zM151 551h3v1h-3zM157 551h3v1h-3zM163 551h3v1h-3zM169 551h3v1h-3zM175 551h3v1h-3zM181 551h3v1h-3zM187 551h3v1h-3zM193 551h3v1h-3zM199 551h3v1h-3zM205 551h3v1h-3zM211 551h3v1h-3zM217 551h3v1h-3zM223 551h3v1h-3zM229 551h3v1h-3zM235 551h3v1h-3zM241 551h3v1h-3zM247 551h3v1h-3zM253 551h3v1h-3zM259 551h3v1h-3zM265 551h3v1h-3zM271 551h3v1h-3zM277 551h3v1h-3zM283 551h3v1h-3zM289 551h3v1h-3zM295 551h3v1h-3zM301 551h3v1h-3zM307 551h3v1h-3zM313 551h3v1h-3zM319 551h3v1h-3zM325 551h3v1h-3zM331 551h3v1h-3zM337 551h3v1h-3zM343 551h3v1h-3zM349 551h3v1h-3zM355 551h3v1h-3zM361 551h3v1h-3zM367 551h3v1h-3zM373 551h3v1h-3zM379 551h3v1h-3zM385 551h3v1h-3zM391 551h3v1h-3zM397 551h3v1h-3zM403 551h3v1h-3zM409 551h3v1h-3zM415 551h3v1h-3zM421 551h3v1h-3zM427 551h3v1h-3zM433 551h3v1h-3zM439 551h3v1h-3zM445 551h3v1h-3zM451 551h3v1h-3zM457 551h3v1h-3zM463 551h3v1h-3zM469 551h3v1h-3zM475 551h3v1h-3zM481 551h3v1h-3zM487 551h3v1h-3zM493 551h3v1h-3zM499 551h3v1h-3zM505 551h3v1h-3zM511 551h3v1h-3zM517 551h3v1h-3zM523 551h3v1h-3zM529 551h3v1h-3zM535 551h3v1h-3zM541 551h3v1h-3zM547 551h3v1h-3zM553 551h3v1h-3zM559 551h3v1h-3zM565 551h3v1h-3zM571 551h3v1h-3zM577 551h3v1h-3zM583 551h3v1h-3zM589 551h3v1h-3zM595 551h3v1h-3zM601 551h3v1h-3zM607 551h3v1h-3zM613 551h3v1h-3zM619 551h3v1h-3zM625 551h3v1h-3zM631 551h3v1h-3zM637 551h3v1h-3zM643 551h3v1h-3zM649 551h3v1h-3zM655 551h3v1h-3zM661 551h3v1h-3zM667 551h3v1h-3zM673 551h3v1h-3zM44 34h1v3h-1zM44 40h1v3h-1zM44 46h1v3h-1zM44 52h1v3h-1zM44 58h1v3h-1zM44 64h1v3h-1zM44 70h1v3h-1zM44 76h1v3h-1zM44 82h1v3h-1zM44 88h1v3h-1zM44 94h1v3h-1zM44 100h1v3h-1zM44 106h1v3h-1zM44 112h1v3h-1zM44 118h1v3h-1zM44 124h1v3h-1zM44 130h1v3h-1zM44 136h1v3h-1zM44 142h1v3h-1zM44 148h1v3h-1zM44 154h1v3h-1zM44 160h1v3h-1zM44 166h1v3h-1zM44 172h1v3h-1zM44 178h1v3h-1zM44 184h1v3h-1zM44 190h1v3h-1zM44 196h1v3h-1zM44 202h1v3h-1zM44 208h1v3h-1zM44 214h1v3h-1zM44 220h1v3h-1zM44 226h1v3h-1zM44 232h1v3h-1zM44 238h1v3h-1zM44 244h1v3h-1zM44 250h1v3h-1zM44 256h1v3h-1zM44 262h1v3h-1zM44 268h1v3h-1zM44 274h1v3h-1zM44 280h1v3h-1zM44 286h1v3h-1zM44 292h1v3h-1zM44 298h1v3h-1zM44 304h1v3h-1zM44 310h1v3h-1zM44 316h1v3h-1zM44 322h1v3h-1zM44 328h1v3h-1zM44 334h1v3h-1zM44 340h1v3h-1zM44 346h1v3h-1zM44 352h1v3h-1zM44 358h1v3h-1zM44 364h1v3h-1zM44 370h1v3h-1zM44 376h1v3h-1zM44 382h1v3h-1zM44 388h1v3h-1zM44 394h1v3h-1zM44 400h1v3h-1zM44 406h1v3h-1zM44 412h1v3h-1zM44 418h1v3h-1zM44 424h1v3h-1zM44 430h1v3h-1zM44 436h1v3h-1zM44 442h1v3h-1zM44 448h1v3h-1zM44 454h1v3h-1zM44 460h1v3h-1zM44 466h1v3h-1zM44 472h1v3h-1zM44 478h1v3h-1zM44 484h1v3h-1zM44 490h1v3h-1zM44 496h1v3h-1zM44 502h1v3h-1zM44 508h1v3h-1zM44 514h1v3h-1zM44 520h1v3h-1zM44 526h1v3h-1zM44 532h1v3h-1zM44 538h1v3h-1zM44 544h1v3h-1zM44 550h1v1h-1zM76 34h1v3h-1zM76 40h1v3h-1zM76 46h1v3h-1zM76 52h1v3h-1zM76 58h1v3h-1zM76 64h1v3h-1zM76 70h1v3h-1zM76 76h1v3h-1zM76 82h1v3h-1zM76 88h1v3h-1zM76 94h1v3h-1zM76 100h1v3h-1zM76 106h1v3h-1zM76 112h1v3h-1zM76 118h1v3h-1zM76 124h1v3h-1zM76 130h1v3h-1zM76 136h1v3h-1zM76 142h1v3h-1zM76 148h1v3h-1zM76 154h1v3h-1zM76 160h1v3h-1zM76 166h1v3h-1zM76 172h1v3h-1zM76 178h1v3h-1zM76 184h1v3h-1zM76 190h1v3h-1zM76 196h1v3h-1zM76 202h1v3h-1zM76 208h1v3h-1zM76 214h1v3h-1zM76 220h1v3h-1zM76 226h1v3h-1zM76 232h1v3h-1zM76 238h1v3h-1zM76 244h1v3h-1zM76 250h1v3h-1zM76 256h1v3h-1zM76 262h1v3h-1zM76 268h1v3h-1zM76 274h1v3h-1zM76 280h1v3h-1zM76 286h1v3h-1zM76 292h1v3h-1zM76 298h1v3h-1zM76 304h1v3h-1zM76 310h1v3h-1zM76 316h1v3h-1zM76 322h1v3h-1zM76 328h1v3h-1zM76 334h1v3h-1zM76 340h1v3h-1zM76 346h1v3h-1zM76 352h1v3h-1zM76 358h1v3h-1zM76 364h1v3h-1zM76 370h1v3h-1zM76 376h1v3h-1zM76 382h1v3h-1zM76 388h1v3h-1zM76 394h1v3h-1zM76 400h1v3h-1zM76 406h1v3h-1zM76 412h1v3h-1zM76 418h1v3h-1zM76 424h1v3h-1zM76 430h1v3h-1zM76 436h1v3h-1zM76 442h1v3h-1zM76 448h1v3h-1zM76 454h1v3h-1zM76 460h1v3h-1zM76 466h1v3h-1zM76 472h1v3h-1zM76 478h1v3h-1zM76 484h1v3h-1zM76 490h1v3h-1zM76 496h1v3h-1zM76 502h1v3h-1zM76 508h1v3h-1zM76 514h1v3h-1zM76 520h1v3h-1zM76 526h1v3h-1zM76 532h1v3h-1zM76 538h1v3h-1zM76 544h1v3h-1zM76 550h1v1h-1zM108 34h1v3h-1zM108 40h1v3h-1zM108 46h1v3h-1zM108 52h1v3h-1zM108 58h1v3h-1zM108 64h1v3h-1zM108 70h1v3h-1zM108 76h1v3h-1zM108 82h1v3h-1zM108 88h1v3h-1zM108 94h1v3h-1zM108 100h1v3h-1zM108 106h1v3h-1zM108 112h1v3h-1zM108 118h1v3h-1zM108 124h1v3h-1zM108 130h1v3h-1zM108 136h1v3h-1zM108 142h1v3h-1zM108 148h1v3h-1zM108 154h1v3h-1zM108 160h1v3h-1zM108 166h1v3h-1zM108 172h1v3h-1zM108 178h1v3h-1zM108 184h1v3h-1zM108 190h1v3h-1zM108 196h1v3h-1zM108 202h1v3h-1zM108 208h1v3h-1zM108 214h1v3h-1zM108 220h1v3h-1zM108 226h1v3h-1zM108 232h1v3h-1zM108 238h1v3h-1zM108 244h1v3h-1zM108 250h1v3h-1zM108 256h1v3h-1zM108 262h1v3h-1zM108 268h1v3h-1zM108 274h1v3h-1zM108 280h1v3h-1zM108 286h1v3h-1zM108 292h1v3h-1zM108 298h1v3h-1zM108 304h1v3h-1zM108 310h1v3h-1zM108 316h1v3h-1zM108 322h1v3h-1zM108 328h1v3h-1zM108 334h1v3h-1zM108 340h1v3h-1zM108 346h1v3h-1zM108 352h1v3h-1zM108 358h1v3h-1zM108 364h1v3h-1zM108 370h1v3h-1zM108 376h1v3h-1zM108 382h1v3h-1zM108 388h1v3h-1zM108 394h1v3h-1zM108 400h1v3h-1zM108 406h1v3h-1zM108 412h1v3h-1zM108 418h1v3h-1zM108 424h1v3h-1zM108 430h1v3h-1zM108 436h1v3h-1zM108 442h1v3h-1zM108 448h1v3h-1zM108 454h1v3h-1zM108 460h1v3h-1zM108 466h1v3h-1zM108 472h1v3h-1zM108 478h1v3h-1zM108 484h1v3h-1zM108 490h1v3h-1zM108 496h1v3h-1zM108 502h1v3h-1zM108 508h1v3h-1zM108 514h1v3h-1zM108 520h1v3h-1zM108 526h1v3h-1zM108 532h1v3h-1zM108 538h1v3h-1zM108 544h1v3h-1zM108 550h1v1h-1zM140 34h1v3h-1zM140 40h1v3h-1zM140 46h1v3h-1zM140 52h1v3h-1zM140 58h1v3h-1zM140 64h1v3h-1zM140 70h1v3h-1zM140 76h1v3h-1zM140 82h1v3h-1zM140 88h1v3h-1zM140 94h1v3h-1zM140 100h1v3h-1zM140 106h1v3h-1zM140 112h1v3h-1zM140 118h1v3h-1zM140 124h1v3h-1zM140 130h1v3h-1zM140 136h1v3h-1zM140 142h1v3h-1zM140 148h1v3h-1zM140 154h1v3h-1zM140 160h1v3h-1zM140 166h1v3h-1zM140 172h1v3h-1zM140 178h1v3h-1zM140 184h1v3h-1zM140 190h1v3h-1zM140 196h1v3h-1zM140 202h1v3h-1zM140 208h1v3h-1zM140 214h1v3h-1zM140 220h1v3h-1zM140 226h1v3h-1zM140 232h1v3h-1zM140 238h1v3h-1zM140 244h1v3h-1zM140 250h1v3h-1zM140 256h1v3h-1zM140 262h1v3h-1zM140 268h1v3h-1zM140 274h1v3h-1zM140 280h1v3h-1zM140 286h1v3h-1zM140 292h1v3h-1zM140 298h1v3h-1zM140 304h1v3h-1zM140 310h1v3h-1zM140 316h1v3h-1zM140 322h1v3h-1zM140 328h1v3h-1zM140 334h1v3h-1zM140 340h1v3h-1zM140 346h1v3h-1zM140 352h1v3h-1zM140 358h1v3h-1zM140 364h1v3h-1zM140 370h1v3h-1zM140 376h1v3h-1zM140 382h1v3h-1zM140 388h1v3h-1zM140 394h1v3h-1zM140 400h1v3h-1zM140 406h1v3h-1zM140 412h1v3h-1zM140 418h1v3h-1zM140 424h1v3h-1zM140 430h1v3h-1zM140 436h1v3h-1zM140 442h1v3h-1zM140 448h1v3h-1zM140 454h1v3h-1zM140 460h1v3h-1zM140 466h1v3h-1zM140 472h1v3h-1zM140 478h1v3h-1zM140 484h1v3h-1zM140 490h1v3h-1zM140 496h1v3h-1zM140 502h1v3h-1zM140 508h1v3h-1zM140 514h1v3h-1zM140 520h1v3h-1zM140 526h1v3h-1zM140 532h1v3h-1zM140 538h1v3h-1zM140 544h1v3h-1zM140 550h1v1h-1zM172 34h1v3h-1zM172 40h1v3h-1zM172 46h1v3h-1zM172 52h1v3h-1zM172 58h1v3h-1zM172 64h1v3h-1zM172 70h1v3h-1zM172 76h1v3h-1zM172 82h1v3h-1zM172 88h1v3h-1zM172 94h1v3h-1zM172 100h1v3h-1zM172 106h1v3h-1zM172 112h1v3h-1zM172 118h1v3h-1zM172 124h1v3h-1zM172 130h1v3h-1zM172 136h1v3h-1zM172 142h1v3h-1zM172 148h1v3h-1zM172 154h1v3h-1zM172 160h1v3h-1zM172 166h1v3h-1zM172 172h1v3h-1zM172 178h1v3h-1zM172 184h1v3h-1zM172 190h1v3h-1zM172 196h1v3h-1zM172 202h1v3h-1zM172 208h1v3h-1zM172 214h1v3h-1zM172 220h1v3h-1zM172 226h1v3h-1zM172 232h1v3h-1zM172 238h1v3h-1zM172 244h1v3h-1zM172 250h1v3h-1zM172 256h1v3h-1zM172 262h1v3h-1zM172 268h1v3h-1zM172 274h1v3h-1zM172 280h1v3h-1zM172 286h1v3h-1zM172 292h1v3h-1zM172 298h1v3h-1zM172 304h1v3h-1zM172 310h1v3h-1zM172 316h1v3h-1zM172 322h1v3h-1zM172 328h1v3h-1zM172 334h1v3h-1zM172 340h1v3h-1zM172 346h1v3h-1zM172 352h1v3h-1zM172 358h1v3h-1zM172 364h1v3h-1zM172 370h1v3h-1zM172 376h1v3h-1zM172 382h1v3h-1zM172 388h1v3h-1zM172 394h1v3h-1zM172 400h1v3h-1zM172 406h1v3h-1zM172 412h1v3h-1zM172 418h1v3h-1zM172 424h1v3h-1zM172 430h1v3h-1zM172 436h1v3h-1zM172 442h1v3h-1zM172 448h1v3h-1zM172 454h1v3h-1zM172 460h1v3h-1zM172 466h1v3h-1zM172 472h1v3h-1zM172 478h1v3h-1zM172 484h1v3h-1zM172 490h1v3h-1zM172 496h1v3h-1zM172 502h1v3h-1zM172 508h1v3h-1zM172 514h1v3h-1zM172 520h1v3h-1zM172 526h1v3h-1zM172 532h1v3h-1zM172 538h1v3h-1zM172 544h1v3h-1zM172 550h1v1h-1zM204 34h1v3h-1zM204 40h1v3h-1zM204 46h1v3h-1zM204 52h1v3h-1zM204 58h1v3h-1zM204 64h1v3h-1zM204 70h1v3h-1zM204 76h1v3h-1zM204 82h1v3h-1zM204 88h1v3h-1zM204 94h1v3h-1zM204 100h1v3h-1zM204 106h1v3h-1zM204 112h1v3h-1zM204 118h1v3h-1zM204 124h1v3h-1zM204 130h1v3h-1zM204 136h1v3h-1zM204 142h1v3h-1zM204 148h1v3h-1zM204 154h1v3h-1zM204 160h1v3h-1zM204 166h1v3h-1zM204 172h1v3h-1zM204 178h1v3h-1zM204 184h1v3h-1zM204 190h1v3h-1zM204 196h1v3h-1zM204 202h1v3h-1zM204 208h1v3h-1zM204 214h1v3h-1zM204 220h1v3h-1zM204 226h1v3h-1zM204 232h1v3h-1zM204 238h1v3h-1zM204 244h1v3h-1zM204 250h1v3h-1zM204 256h1v3h-1zM204 262h1v3h-1zM204 268h1v3h-1zM204 274h1v3h-1zM204 280h1v3h-1zM204 286h1v3h-1zM204 292h1v3h-1zM204 298h1v3h-1zM204 304h1v3h-1zM204 310h1v3h-1zM204 316h1v3h-1zM204 322h1v3h-1zM204 328h1v3h-1zM204 334h1v3h-1zM204 340h1v3h-1zM204 346h1v3h-1zM204 352h1v3h-1zM204 358h1v3h-1zM204 364h1v3h-1zM204 370h1v3h-1zM204 376h1v3h-1zM204 382h1v3h-1zM204 388h1v3h-1zM204 394h1v3h-1zM204 400h1v3h-1zM204 406h1v3h-1zM204 412h1v3h-1zM204 418h1v3h-1zM204 424h1v3h-1zM204 430h1v3h-1zM204 436h1v3h-1zM204 442h1v3h-1zM204 448h1v3h-1zM204 454h1v3h-1zM204 460h1v3h-1zM204 466h1v3h-1zM204 472h1v3h-1zM204 478h1v3h-1zM204 484h1v3h-1zM204 490h1v3h-1zM204 496h1v3h-1zM204 502h1v3h-1zM204 508h1v3h-1zM204 514h1v3h-1zM204 520h1v3h-1zM204 526h1v3h-1zM204 532h1v3h-1zM204 538h1v3h-1zM204 544h1v3h-1zM204 550h1v1h-1zM236 34h1v3h-1zM236 40h1v3h-1zM236 46h1v3h-1zM236 52h1v3h-1zM236 58h1v3h-1zM236 64h1v3h-1zM236 70h1v3h-1zM236 76h1v3h-1zM236 82h1v3h-1zM236 88h1v3h-1zM236 94h1v3h-1zM236 100h1v3h-1zM236 106h1v3h-1zM236 112h1v3h-1zM236 118h1v3h-1zM236 124h1v3h-1zM236 130h1v3h-1zM236 136h1v3h-1zM236 142h1v3h-1zM236 148h1v3h-1zM236 154h1v3h-1zM236 160h1v3h-1zM236 166h1v3h-1zM236 172h1v3h-1zM236 178h1v3h-1zM236 184h1v3h-1zM236 190h1v3h-1zM236 196h1v3h-1zM236 202h1v3h-1zM236 208h1v3h-1zM236 214h1v3h-1zM236 220h1v3h-1zM236 226h1v3h-1zM236 232h1v3h-1zM236 238h1v3h-1zM236 244h1v3h-1zM236 250h1v3h-1zM236 256h1v3h-1zM236 262h1v3h-1zM236 268h1v3h-1zM236 274h1v3h-1zM236 280h1v3h-1zM236 286h1v3h-1zM236 292h1v3h-1zM236 298h1v3h-1zM236 304h1v3h-1zM236 310h1v3h-1zM236 316h1v3h-1zM236 322h1v3h-1zM236 328h1v3h-1zM236 334h1v3h-1zM236 340h1v3h-1zM236 346h1v3h-1zM236 352h1v3h-1zM236 358h1v3h-1zM236 364h1v3h-1zM236 370h1v3h-1zM236 376h1v3h-1zM236 382h1v3h-1zM236 388h1v3h-1zM236 394h1v3h-1zM236 400h1v3h-1zM236 406h1v3h-1zM236 412h1v3h-1zM236 418h1v3h-1zM236 424h1v3h-1zM236 430h1v3h-1zM236 436h1v3h-1zM236 442h1v3h-1zM236 448h1v3h-1zM236 454h1v3h-1zM236 460h1v3h-1zM236 466h1v3h-1zM236 472h1v3h-1zM236 478h1v3h-1zM236 484h1v3h-1zM236 490h1v3h-1zM236 496h1v3h-1zM236 502h1v3h-1zM236 508h1v3h-1zM236 514h1v3h-1zM236 520h1v3h-1zM236 526h1v3h-1zM236 532h1v3h-1zM236 538h1v3h-1zM236 544h1v3h-1zM236 550h1v1h-1zM268 34h1v3h-1zM268 40h1v3h-1zM268 46h1v3h-1zM268 52h1v3h-1zM268 58h1v3h-1zM268 64h1v3h-1zM268 70h1v3h-1zM268 76h1v3h-1zM268 82h1v3h-1zM268 88h1v3h-1zM268 94h1v3h-1zM268 100h1v3h-1zM268 106h1v3h-1zM268 112h1v3h-1zM268 118h1v3h-1zM268 124h1v3h-1zM268 130h1v3h-1zM268 136h1v3h-1zM268 142h1v3h-1zM268 148h1v3h-1zM268 154h1v3h-1zM268 160h1v3h-1zM268 166h1v3h-1zM268 172h1v3h-1zM268 178h1v3h-1zM268 184h1v3h-1zM268 190h1v3h-1zM268 196h1v3h-1zM268 202h1v3h-1zM268 208h1v3h-1zM268 214h1v3h-1zM268 220h1v3h-1zM268 226h1v3h-1zM268 232h1v3h-1zM268 238h1v3h-1zM268 244h1v3h-1zM268 250h1v3h-1zM268 256h1v3h-1zM268 262h1v3h-1zM268 268h1v3h-1zM268 274h1v3h-1zM268 280h1v3h-1zM268 286h1v3h-1zM268 292h1v3h-1zM268 298h1v3h-1zM268 304h1v3h-1zM268 310h1v3h-1zM268 316h1v3h-1zM268 322h1v3h-1zM268 328h1v3h-1zM268 334h1v3h-1zM268 340h1v3h-1zM268 346h1v3h-1zM268 352h1v3h-1zM268 358h1v3h-1zM268 364h1v3h-1zM268 370h1v3h-1zM268 376h1v3h-1zM268 382h1v3h-1zM268 388h1v3h-1zM268 394h1v3h-1zM268 400h1v3h-1zM268 406h1v3h-1zM268 412h1v3h-1zM268 418h1v3h-1zM268 424h1v3h-1zM268 430h1v3h-1zM268 436h1v3h-1zM268 442h1v3h-1zM268 448h1v3h-1zM268 454h1v3h-1zM268 460h1v3h-1zM268 466h1v3h-1zM268 472h1v3h-1zM268 478h1v3h-1zM268 484h1v3h-1zM268 490h1v3h-1zM268 496h1v3h-1zM268 502h1v3h-1zM268 508h1v3h-1zM268 514h1v3h-1zM268 520h1v3h-1zM268 526h1v3h-1zM268 532h1v3h-1zM268 538h1v3h-1zM268 544h1v3h-1zM268 550h1v1h-1zM300 34h1v3h-1zM300 40h1v3h-1zM300 46h1v3h-1zM300 52h1v3h-1zM300 58h1v3h-1zM300 64h1v3h-1zM300 70h1v3h-1zM300 76h1v3h-1zM300 82h1v3h-1zM300 88h1v3h-1zM300 94h1v3h-1zM300 100h1v3h-1zM300 106h1v3h-1zM300 112h1v3h-1zM300 118h1v3h-1zM300 124h1v3h-1zM300 130h1v3h-1zM300 136h1v3h-1zM300 142h1v3h-1zM300 148h1v3h-1zM300 154h1v3h-1zM300 160h1v3h-1zM300 166h1v3h-1zM300 172h1v3h-1zM300 178h1v3h-1zM300 184h1v3h-1zM300 190h1v3h-1zM300 196h1v3h-1zM300 202h1v3h-1zM300 208h1v3h-1zM300 214h1v3h-1zM300 220h1v3h-1zM300 226h1v3h-1zM300 232h1v3h-1zM300 238h1v3h-1zM300 244h1v3h-1zM300 250h1v3h-1zM300 256h1v3h-1zM300 262h1v3h-1zM300 268h1v3h-1zM300 274h1v3h-1zM300 280h1v3h-1zM300 286h1v3h-1zM300 292h1v3h-1zM300 298h1v3h-1zM300 304h1v3h-1zM300 310h1v3h-1zM300 316h1v3h-1zM300 322h1v3h-1zM300 328h1v3h-1zM300 334h1v3h-1zM300 340h1v3h-1zM300 346h1v3h-1zM300 352h1v3h-1zM300 358h1v3h-1zM300 364h1v3h-1zM300 370h1v3h-1zM300 376h1v3h-1zM300 382h1v3h-1zM300 388h1v3h-1zM300 394h1v3h-1zM300 400h1v3h-1zM300 406h1v3h-1zM300 412h1v3h-1zM300 418h1v3h-1zM300 424h1v3h-1zM300 430h1v3h-1zM300 436h1v3h-1zM300 442h1v3h-1zM300 448h1v3h-1zM300 454h1v3h-1zM300 460h1v3h-1zM300 466h1v3h-1zM300 472h1v3h-1zM300 478h1v3h-1zM300 484h1v3h-1zM300 490h1v3h-1zM300 496h1v3h-1zM300 502h1v3h-1zM300 508h1v3h-1zM300 514h1v3h-1zM300 520h1v3h-1zM300 526h1v3h-1zM300 532h1v3h-1zM300 538h1v3h-1zM300 544h1v3h-1zM300 550h1v1h-1zM332 34h1v3h-1zM332 40h1v3h-1zM332 46h1v3h-1zM332 52h1v3h-1zM332 58h1v3h-1zM332 64h1v3h-1zM332 70h1v3h-1zM332 76h1v3h-1zM332 82h1v3h-1zM332 88h1v3h-1zM332 94h1v3h-1zM332 100h1v3h-1zM332 106h1v3h-1zM332 112h1v3h-1zM332 118h1v3h-1zM332 124h1v3h-1zM332 130h1v3h-1zM332 136h1v3h-1zM332 142h1v3h-1zM332 148h1v3h-1zM332 154h1v3h-1zM332 160h1v3h-1zM332 166h1v3h-1zM332 172h1v3h-1zM332 178h1v3h-1zM332 184h1v3h-1zM332 190h1v3h-1zM332 196h1v3h-1zM332 202h1v3h-1zM332 208h1v3h-1zM332 214h1v3h-1zM332 220h1v3h-1zM332 226h1v3h-1zM332 232h1v3h-1zM332 238h1v3h-1zM332 244h1v3h-1zM332 250h1v3h-1zM332 256h1v3h-1zM332 262h1v3h-1zM332 268h1v3h-1zM332 274h1v3h-1zM332 280h1v3h-1zM332 286h1v3h-1zM332 292h1v3h-1zM332 298h1v3h-1zM332 304h1v3h-1zM332 310h1v3h-1zM332 316h1v3h-1zM332 322h1v3h-1zM332 328h1v3h-1zM332 334h1v3h-1zM332 340h1v3h-1zM332 346h1v3h-1zM332 352h1v3h-1zM332 358h1v3h-1zM332 364h1v3h-1zM332 370h1v3h-1zM332 376h1v3h-1zM332 382h1v3h-1zM332 388h1v3h-1zM332 394h1v3h-1zM332 400h1v3h-1zM332 406h1v3h-1zM332 412h1v3h-1zM332 418h1v3h-1zM332 424h1v3h-1zM332 430h1v3h-1zM332 436h1v3h-1zM332 442h1v3h-1zM332 448h1v3h-1zM332 454h1v3h-1zM332 460h1v3h-1zM332 466h1v3h-1zM332 472h1v3h-1zM332 478h1v3h-1zM332 484h1v3h-1zM332 490h1v3h-1zM332 496h1v3h-1zM332 502h1v3h-1zM332 508h1v3h-1zM332 514h1v3h-1zM332 520h1v3h-1zM332 526h1v3h-1zM332 532h1v3h-1zM332 538h1v3h-1zM332 544h1v3h-1zM332 550h1v1h-1zM364 34h1v3h-1zM364 40h1v3h-1zM364 46h1v3h-1zM364 52h1v3h-1zM364 58h1v3h-1zM364 64h1v3h-1zM364 70h1v3h-1zM364 76h1v3h-1zM364 82h1v3h-1zM364 88h1v3h-1zM364 94h1v3h-1zM364 100h1v3h-1zM364 106h1v3h-1zM364 112h1v3h-1zM364 118h1v3h-1zM364 124h1v3h-1zM364 130h1v3h-1zM364 136h1v3h-1zM364 142h1v3h-1zM364 148h1v3h-1zM364 154h1v3h-1zM364 160h1v3h-1zM364 166h1v3h-1zM364 172h1v3h-1zM364 178h1v3h-1zM364 184h1v3h-1zM364 190h1v3h-1zM364 196h1v3h-1zM364 202h1v3h-1zM364 208h1v3h-1zM364 214h1v3h-1zM364 220h1v3h-1zM364 226h1v3h-1zM364 232h1v3h-1zM364 238h1v3h-1zM364 244h1v3h-1zM364 250h1v3h-1zM364 256h1v3h-1zM364 262h1v3h-1zM364 268h1v3h-1zM364 274h1v3h-1zM364 280h1v3h-1zM364 286h1v3h-1zM364 292h1v3h-1zM364 298h1v3h-1zM364 304h1v3h-1zM364 310h1v3h-1zM364 316h1v3h-1zM364 322h1v3h-1zM364 328h1v3h-1zM364 334h1v3h-1zM364 340h1v3h-1zM364 346h1v3h-1zM364 352h1v3h-1zM364 358h1v3h-1zM364 364h1v3h-1zM364 370h1v3h-1zM364 376h1v3h-1zM364 382h1v3h-1zM364 388h1v3h-1zM364 394h1v3h-1zM364 400h1v3h-1zM364 406h1v3h-1zM364 412h1v3h-1zM364 418h1v3h-1zM364 424h1v3h-1zM364 430h1v3h-1zM364 436h1v3h-1zM364 442h1v3h-1zM364 448h1v3h-1zM364 454h1v3h-1zM364 460h1v3h-1zM364 466h1v3h-1zM364 472h1v3h-1zM364 478h1v3h-1zM364 484h1v3h-1zM364 490h1v3h-1zM364 496h1v3h-1zM364 502h1v3h-1zM364 508h1v3h-1zM364 514h1v3h-1zM364 520h1v3h-1zM364 526h1v3h-1zM364 532h1v3h-1zM364 538h1v3h-1zM364 544h1v3h-1zM364 550h1v1h-1zM396 34h1v3h-1zM396 40h1v3h-1zM396 46h1v3h-1zM396 52h1v3h-1zM396 58h1v3h-1zM396 64h1v3h-1zM396 70h1v3h-1zM396 76h1v3h-1zM396 82h1v3h-1zM396 88h1v3h-1zM396 94h1v3h-1zM396 100h1v3h-1zM396 106h1v3h-1zM396 112h1v3h-1zM396 118h1v3h-1zM396 124h1v3h-1zM396 130h1v3h-1zM396 136h1v3h-1zM396 142h1v3h-1zM396 148h1v3h-1zM396 154h1v3h-1zM396 160h1v3h-1zM396 166h1v3h-1zM396 172h1v3h-1zM396 178h1v3h-1zM396 184h1v3h-1zM396 190h1v3h-1zM396 196h1v3h-1zM396 202h1v3h-1zM396 208h1v3h-1zM396 214h1v3h-1zM396 220h1v3h-1zM396 226h1v3h-1zM396 232h1v3h-1zM396 238h1v3h-1zM396 244h1v3h-1zM396 250h1v3h-1zM396 256h1v3h-1zM396 262h1v3h-1zM396 268h1v3h-1zM396 274h1v3h-1zM396 280h1v3h-1zM396 286h1v3h-1zM396 292h1v3h-1zM396 298h1v3h-1zM396 304h1v3h-1zM396 310h1v3h-1zM396 316h1v3h-1zM396 322h1v3h-1zM396 328h1v3h-1zM396 334h1v3h-1zM396 340h1v3h-1zM396 346h1v3h-1zM396 352h1v3h-1zM396 358h1v3h-1zM396 364h1v3h-1zM396 370h1v3h-1zM396 376h1v3h-1zM396 382h1v3h-1zM396 388h1v3h-1zM396 394h1v3h-1zM396 400h1v3h-1zM396 406h1v3h-1zM396 412h1v3h-1zM396 418h1v3h-1zM396 424h1v3h-1zM396 430h1v3h-1zM396 436h1v3h-1zM396 442h1v3h-1zM396 448h1v3h-1zM396 454h1v3h-1zM396 460h1v3h-1zM396 466h1v3h-1zM396 472h1v3h-1zM396 478h1v3h-1zM396 484h1v3h-1zM396 490h1v3h-1zM396 496h1v3h-1zM396 502h1v3h-1zM396 508h1v3h-1zM396 514h1v3h-1zM396 520h1v3h-1zM396 526h1v3h-1zM396 532h1v3h-1zM396 538h1v3h-1zM396 544h1v3h-1zM396 550h1v1h-1zM428 34h1v3h-1zM428 40h1v3h-1zM428 46h1v3h-1zM428 52h1v3h-1zM428 58h1v3h-1zM428 64h1v3h-1zM428 70h1v3h-1zM428 76h1v3h-1zM428 82h1v3h-1zM428 88h1v3h-1zM428 94h1v3h-1zM428 100h1v3h-1zM428 106h1v3h-1zM428 112h1v3h-1zM428 118h1v3h-1zM428 124h1v3h-1zM428 130h1v3h-1zM428 136h1v3h-1zM428 142h1v3h-1zM428 148h1v3h-1zM428 154h1v3h-1zM428 160h1v3h-1zM428 166h1v3h-1zM428 172h1v3h-1zM428 178h1v3h-1zM428 184h1v3h-1zM428 190h1v3h-1zM428 196h1v3h-1zM428 202h1v3h-1zM428 208h1v3h-1zM428 214h1v3h-1zM428 220h1v3h-1zM428 226h1v3h-1zM428 232h1v3h-1zM428 238h1v3h-1zM428 244h1v3h-1zM428 250h1v3h-1zM428 256h1v3h-1zM428 262h1v3h-1zM428 268h1v3h-1zM428 274h1v3h-1zM428 280h1v3h-1zM428 286h1v3h-1zM428 292h1v3h-1zM428 298h1v3h-1zM428 304h1v3h-1zM428 310h1v3h-1zM428 316h1v3h-1zM428 322h1v3h-1zM428 328h1v3h-1zM428 334h1v3h-1zM428 340h1v3h-1zM428 346h1v3h-1zM428 352h1v3h-1zM428 358h1v3h-1zM428 364h1v3h-1zM428 370h1v3h-1zM428 376h1v3h-1zM428 382h1v3h-1zM428 388h1v3h-1zM428 394h1v3h-1zM428 400h1v3h-1zM428 406h1v3h-1zM428 412h1v3h-1zM428 418h1v3h-1zM428 424h1v3h-1zM428 430h1v3h-1zM428 436h1v3h-1zM428 442h1v3h-1zM428 448h1v3h-1zM428 454h1v3h-1zM428 460h1v3h-1zM428 466h1v3h-1zM428 472h1v3h-1zM428 478h1v3h-1zM428 484h1v3h-1zM428 490h1v3h-1zM428 496h1v3h-1zM428 502h1v3h-1zM428 508h1v3h-1zM428 514h1v3h-1zM428 520h1v3h-1zM428 526h1v3h-1zM428 532h1v3h-1zM428 538h1v3h-1zM428 544h1v3h-1zM428 550h1v1h-1zM460 34h1v3h-1zM460 40h1v3h-1zM460 46h1v3h-1zM460 52h1v3h-1zM460 58h1v3h-1zM460 64h1v3h-1zM460 70h1v3h-1zM460 76h1v3h-1zM460 82h1v3h-1zM460 88h1v3h-1zM460 94h1v3h-1zM460 100h1v3h-1zM460 106h1v3h-1zM460 112h1v3h-1zM460 118h1v3h-1zM460 124h1v3h-1zM460 130h1v3h-1zM460 136h1v3h-1zM460 142h1v3h-1zM460 148h1v3h-1zM460 154h1v3h-1zM460 160h1v3h-1zM460 166h1v3h-1zM460 172h1v3h-1zM460 178h1v3h-1zM460 184h1v3h-1zM460 190h1v3h-1zM460 196h1v3h-1zM460 202h1v3h-1zM460 208h1v3h-1zM460 214h1v3h-1zM460 220h1v3h-1zM460 226h1v3h-1zM460 232h1v3h-1zM460 238h1v3h-1zM460 244h1v3h-1zM460 250h1v3h-1zM460 256h1v3h-1zM460 262h1v3h-1zM460 268h1v3h-1zM460 274h1v3h-1zM460 280h1v3h-1zM460 286h1v3h-1zM460 292h1v3h-1zM460 298h1v3h-1zM460 304h1v3h-1zM460 310h1v3h-1zM460 316h1v3h-1zM460 322h1v3h-1zM460 328h1v3h-1zM460 334h1v3h-1zM460 340h1v3h-1zM460 346h1v3h-1zM460 352h1v3h-1zM460 358h1v3h-1zM460 364h1v3h-1zM460 370h1v3h-1zM460 376h1v3h-1zM460 382h1v3h-1zM460 388h1v3h-1zM460 394h1v3h-1zM460 400h1v3h-1zM460 406h1v3h-1zM460 412h1v3h-1zM460 418h1v3h-1zM460 424h1v3h-1zM460 430h1v3h-1zM460 436h1v3h-1zM460 442h1v3h-1zM460 448h1v3h-1zM460 454h1v3h-1zM460 460h1v3h-1zM460 466h1v3h-1zM460 472h1v3h-1zM460 478h1v3h-1zM460 484h1v3h-1zM460 490h1v3h-1zM460 496h1v3h-1zM460 502h1v3h-1zM460 508h1v3h-1zM460 514h1v3h-1zM460 520h1v3h-1zM460 526h1v3h-1zM460 532h1v3h-1zM460 538h1v3h-1zM460 544h1v3h-1zM460 550h1v1h-1zM492 34h1v3h-1zM492 40h1v3h-1zM492 46h1v3h-1zM492 52h1v3h-1zM492 58h1v3h-1zM492 64h1v3h-1zM492 70h1v3h-1zM492 76h1v3h-1zM492 82h1v3h-1zM492 88h1v3h-1zM492 94h1v3h-1zM492 100h1v3h-1zM492 106h1v3h-1zM492 112h1v3h-1zM492 118h1v3h-1zM492 124h1v3h-1zM492 130h1v3h-1zM492 136h1v3h-1zM492 142h1v3h-1zM492 148h1v3h-1zM492 154h1v3h-1zM492 160h1v3h-1zM492 166h1v3h-1zM492 172h1v3h-1zM492 178h1v3h-1zM492 184h1v3h-1zM492 190h1v3h-1zM492 196h1v3h-1zM492 202h1v3h-1zM492 208h1v3h-1zM492 214h1v3h-1zM492 220h1v3h-1zM492 226h1v3h-1zM492 232h1v3h-1zM492 238h1v3h-1zM492 244h1v3h-1zM492 250h1v3h-1zM492 256h1v3h-1zM492 262h1v3h-1zM492 268h1v3h-1zM492 274h1v3h-1zM492 280h1v3h-1zM492 286h1v3h-1zM492 292h1v3h-1zM492 298h1v3h-1zM492 304h1v3h-1zM492 310h1v3h-1zM492 316h1v3h-1zM492 322h1v3h-1zM492 328h1v3h-1zM492 334h1v3h-1zM492 340h1v3h-1zM492 346h1v3h-1zM492 352h1v3h-1zM492 358h1v3h-1zM492 364h1v3h-1zM492 370h1v3h-1zM492 376h1v3h-1zM492 382h1v3h-1zM492 388h1v3h-1zM492 394h1v3h-1zM492 400h1v3h-1zM492 406h1v3h-1zM492 412h1v3h-1zM492 418h1v3h-1zM492 424h1v3h-1zM492 430h1v3h-1zM492 436h1v3h-1zM492 442h1v3h-1zM492 448h1v3h-1zM492 454h1v3h-1zM492 460h1v3h-1zM492 466h1v3h-1zM492 472h1v3h-1zM492 478h1v3h-1zM492 484h1v3h-1zM492 490h1v3h-1zM492 496h1v3h-1zM492 502h1v3h-1zM492 508h1v3h-1zM492 514h1v3h-1zM492 520h1v3h-1zM492 526h1v3h-1zM492 532h1v3h-1zM492 538h1v3h-1zM492 544h1v3h-1zM492 550h1v1h-1zM524 34h1v3h-1zM524 40h1v3h-1zM524 46h1v3h-1zM524 52h1v3h-1zM524 58h1v3h-1zM524 64h1v3h-1zM524 70h1v3h-1zM524 76h1v3h-1zM524 82h1v3h-1zM524 88h1v3h-1zM524 94h1v3h-1zM524 100h1v3h-1zM524 106h1v3h-1zM524 112h1v3h-1zM524 118h1v3h-1zM524 124h1v3h-1zM524 130h1v3h-1zM524 136h1v3h-1zM524 142h1v3h-1zM524 148h1v3h-1zM524 154h1v3h-1zM524 160h1v3h-1zM524 166h1v3h-1zM524 172h1v3h-1zM524 178h1v3h-1zM524 184h1v3h-1zM524 190h1v3h-1zM524 196h1v3h-1zM524 202h1v3h-1zM524 208h1v3h-1zM524 214h1v3h-1zM524 220h1v3h-1zM524 226h1v3h-1zM524 232h1v3h-1zM524 238h1v3h-1zM524 244h1v3h-1zM524 250h1v3h-1zM524 256h1v3h-1zM524 262h1v3h-1zM524 268h1v3h-1zM524 274h1v3h-1zM524 280h1v3h-1zM524 286h1v3h-1zM524 292h1v3h-1zM524 298h1v3h-1zM524 304h1v3h-1zM524 310h1v3h-1zM524 316h1v3h-1zM524 322h1v3h-1zM524 328h1v3h-1zM524 334h1v3h-1zM524 340h1v3h-1zM524 346h1v3h-1zM524 352h1v3h-1zM524 358h1v3h-1zM524 364h1v3h-1zM524 370h1v3h-1zM524 376h1v3h-1zM524 382h1v3h-1zM524 388h1v3h-1zM524 394h1v3h-1zM524 400h1v3h-1zM524 406h1v3h-1zM524 412h1v3h-1zM524 418h1v3h-1zM524 424h1v3h-1zM524 430h1v3h-1zM524 436h1v3h-1zM524 442h1v3h-1zM524 448h1v3h-1zM524 454h1v3h-1zM524 460h1v3h-1zM524 466h1v3h-1zM524 472h1v3h-1zM524 478h1v3h-1zM524 484h1v3h-1zM524 490h1v3h-1zM524 496h1v3h-1zM524 502h1v3h-1zM524 508h1v3h-1zM524 514h1v3h-1zM524 520h1v3h-1zM524 526h1v3h-1zM524 532h1v3h-1zM524 538h1v3h-1zM524 544h1v3h-1zM524 550h1v1h-1zM556 34h1v3h-1zM556 40h1v3h-1zM556 46h1v3h-1zM556 52h1v3h-1zM556 58h1v3h-1zM556 64h1v3h-1zM556 70h1v3h-1zM556 76h1v3h-1zM556 82h1v3h-1zM556 88h1v3h-1zM556 94h1v3h-1zM556 100h1v3h-1zM556 106h1v3h-1zM556 112h1v3h-1zM556 118h1v3h-1zM556 124h1v3h-1zM556 130h1v3h-1zM556 136h1v3h-1zM556 142h1v3h-1zM556 148h1v3h-1zM556 154h1v3h-1zM556 160h1v3h-1zM556 166h1v3h-1zM556 172h1v3h-1zM556 178h1v3h-1zM556 184h1v3h-1zM556 190h1v3h-1zM556 196h1v3h-1zM556 202h1v3h-1zM556 208h1v3h-1zM556 214h1v3h-1zM556 220h1v3h-1zM556 226h1v3h-1zM556 232h1v3h-1zM556 238h1v3h-1zM556 244h1v3h-1zM556 250h1v3h-1zM556 256h1v3h-1zM556 262h1v3h-1zM556 268h1v3h-1zM556 274h1v3h-1zM556 280h1v3h-1zM556 286h1v3h-1zM556 292h1v3h-1zM556 298h1v3h-1zM556 304h1v3h-1zM556 310h1v3h-1zM556 316h1v3h-1zM556 322h1v3h-1zM556 328h1v3h-1zM556 334h1v3h-1zM556 340h1v3h-1zM556 346h1v3h-1zM556 352h1v3h-1zM556 358h1v3h-1zM556 364h1v3h-1zM556 370h1v3h-1zM556 376h1v3h-1zM556 382h1v3h-1zM556 388h1v3h-1zM556 394h1v3h-1zM556 400h1v3h-1zM556 406h1v3h-1zM556 412h1v3h-1zM556 418h1v3h-1zM556 424h1v3h-1zM556 430h1v3h-1zM556 436h1v3h-1zM556 442h1v3h-1zM556 448h1v3h-1zM556 454h1v3h-1zM556 460h1v3h-1zM556 466h1v3h-1zM556 472h1v3h-1zM556 478h1v3h-1zM556 484h1v3h-1zM556 490h1v3h-1zM556 496h1v3h-1zM556 502h1v3h-1zM556 508h1v3h-1zM556 514h1v3h-1zM556 520h1v3h-1zM556 526h1v3h-1zM556 532h1v3h-1zM556 538h1v3h-1zM556 544h1v3h-1zM556 550h1v1h-1zM588 34h1v3h-1zM588 40h1v3h-1zM588 46h1v3h-1zM588 52h1v3h-1zM588 58h1v3h-1zM588 64h1v3h-1zM588 70h1v3h-1zM588 76h1v3h-1zM588 82h1v3h-1zM588 88h1v3h-1zM588 94h1v3h-1zM588 100h1v3h-1zM588 106h1v3h-1zM588 112h1v3h-1zM588 118h1v3h-1zM588 124h1v3h-1zM588 130h1v3h-1zM588 136h1v3h-1zM588 142h1v3h-1zM588 148h1v3h-1zM588 154h1v3h-1zM588 160h1v3h-1zM588 166h1v3h-1zM588 172h1v3h-1zM588 178h1v3h-1zM588 184h1v3h-1zM588 190h1v3h-1zM588 196h1v3h-1zM588 202h1v3h-1zM588 208h1v3h-1zM588 214h1v3h-1zM588 220h1v3h-1zM588 226h1v3h-1zM588 232h1v3h-1zM588 238h1v3h-1zM588 244h1v3h-1zM588 250h1v3h-1zM588 256h1v3h-1zM588 262h1v3h-1zM588 268h1v3h-1zM588 274h1v3h-1zM588 280h1v3h-1zM588 286h1v3h-1zM588 292h1v3h-1zM588 298h1v3h-1zM588 304h1v3h-1zM588 310h1v3h-1zM588 316h1v3h-1zM588 322h1v3h-1zM588 328h1v3h-1zM588 334h1v3h-1zM588 340h1v3h-1zM588 346h1v3h-1zM588 352h1v3h-1zM588 358h1v3h-1zM588 364h1v3h-1zM588 370h1v3h-1zM588 376h1v3h-1zM588 382h1v3h-1zM588 388h1v3h-1zM588 394h1v3h-1zM588 400h1v3h-1zM588 406h1v3h-1zM588 412h1v3h-1zM588 418h1v3h-1zM588 424h1v3h-1zM588 430h1v3h-1zM588 436h1v3h-1zM588 442h1v3h-1zM588 448h1v3h-1zM588 454h1v3h-1zM588 460h1v3h-1zM588 466h1v3h-1zM588 472h1v3h-1zM588 478h1v3h-1zM588 484h1v3h-1zM588 490h1v3h-1zM588 496h1v3h-1zM588 502h1v3h-1zM588 508h1v3h-1zM588 514h1v3h-1zM588 520h1v3h-1zM588 526h1v3h-1zM588 532h1v3h-1zM588 538h1v3h-1zM588 544h1v3h-1zM588 550h1v1h-1zM620 34h1v3h-1zM620 40h1v3h-1zM620 46h1v3h-1zM620 52h1v3h-1zM620 58h1v3h-1zM620 64h1v3h-1zM620 70h1v3h-1zM620 76h1v3h-1zM620 82h1v3h-1zM620 88h1v3h-1zM620 94h1v3h-1zM620 100h1v3h-1zM620 106h1v3h-1zM620 112h1v3h-1zM620 118h1v3h-1zM620 124h1v3h-1zM620 130h1v3h-1zM620 136h1v3h-1zM620 142h1v3h-1zM620 148h1v3h-1zM620 154h1v3h-1zM620 160h1v3h-1zM620 166h1v3h-1zM620 172h1v3h-1zM620 178h1v3h-1zM620 184h1v3h-1zM620 190h1v3h-1zM620 196h1v3h-1zM620 202h1v3h-1zM620 208h1v3h-1zM620 214h1v3h-1zM620 220h1v3h-1zM620 226h1v3h-1zM620 232h1v3h-1zM620 238h1v3h-1zM620 244h1v3h-1zM620 250h1v3h-1zM620 256h1v3h-1zM620 262h1v3h-1zM620 268h1v3h-1zM620 274h1v3h-1zM620 280h1v3h-1zM620 286h1v3h-1zM620 292h1v3h-1zM620 298h1v3h-1zM620 304h1v3h-1zM620 310h1v3h-1zM620 316h1v3h-1zM620 322h1v3h-1zM620 328h1v3h-1zM620 334h1v3h-1zM620 340h1v3h-1zM620 346h1v3h-1zM620 352h1v3h-1zM620 358h1v3h-1zM620 364h1v3h-1zM620 370h1v3h-1zM620 376h1v3h-1zM620 382h1v3h-1zM620 388h1v3h-1zM620 394h1v3h-1zM620 400h1v3h-1zM620 406h1v3h-1zM620 412h1v3h-1zM620 418h1v3h-1zM620 424h1v3h-1zM620 430h1v3h-1zM620 436h1v3h-1zM620 442h1v3h-1zM620 448h1v3h-1zM620 454h1v3h-1zM620 460h1v3h-1zM620 466h1v3h-1zM620 472h1v3h-1zM620 478h1v3h-1zM620 484h1v3h-1zM620 490h1v3h-1zM620 496h1v3h-1zM620 502h1v3h-1zM620 508h1v3h-1zM620 514h1v3h-1zM620 520h1v3h-1zM620 526h1v3h-1zM620 532h1v3h-1zM620 538h1v3h-1zM620 544h1v3h-1zM620 550h1v1h-1zM652 34h1v3h-1zM652 40h1v3h-1zM652 46h1v3h-1zM652 52h1v3h-1zM652 58h1v3h-1zM652 64h1v3h-1zM652 70h1v3h-1zM652 76h1v3h-1zM652 82h1v3h-1zM652 88h1v3h-1zM652 94h1v3h-1zM652 100h1v3h-1zM652 106h1v3h-1zM652 112h1v3h-1zM652 118h1v3h-1zM652 124h1v3h-1zM652 130h1v3h-1zM652 136h1v3h-1zM652 142h1v3h-1zM652 148h1v3h-1zM652 154h1v3h-1zM652 160h1v3h-1zM652 166h1v3h-1zM652 172h1v3h-1zM652 178h1v3h-1zM652 184h1v3h-1zM652 190h1v3h-1zM652 196h1v3h-1zM652 202h1v3h-1zM652 208h1v3h-1zM652 214h1v3h-1zM652 220h1v3h-1zM652 226h1v3h-1zM652 232h1v3h-1zM652 238h1v3h-1zM652 244h1v3h-1zM652 250h1v3h-1zM652 256h1v3h-1zM652 262h1v3h-1zM652 268h1v3h-1zM652 274h1v3h-1zM652 280h1v3h-1zM652 286h1v3h-1zM652 292h1v3h-1zM652 298h1v3h-1zM652 304h1v3h-1zM652 310h1v3h-1zM652 316h1v3h-1zM652 322h1v3h-1zM652 328h1v3h-1zM652 334h1v3h-1zM652 340h1v3h-1zM652 346h1v3h-1zM652 352h1v3h-1zM652 358h1v3h-1zM652 364h1v3h-1zM652 370h1v3h-1zM652 376h1v3h-1zM652 382h1v3h-1zM652 388h1v3h-1zM652 394h1v3h-1zM652 400h1v3h-1zM652 406h1v3h-1zM652 412h1v3h-1zM652 418h1v3h-1zM652 424h1v3h-1zM652 430h1v3h-1zM652 436h1v3h-1zM652 442h1v3h-1zM652 448h1v3h-1zM652 454h1v3h-1zM652 460h1v3h-1zM652 466h1v3h-1zM652 472h1v3h-1zM652 478h1v3h-1zM652 484h1v3h-1zM652 490h1v3h-1zM652 496h1v3h-1zM652 502h1v3h-1zM652 508h1v3h-1zM652 514h1v3h-1zM652 520h1v3h-1zM652 526h1v3h-1zM652 532h1v3h-1zM652 538h1v3h-1zM652 544h1v3h-1zM652 550h1v1h-1z" fill="#778899"/><path d="M13 433h3v1h-3zM19 433h3v1h-3zM25 433h3v1h-3zM31 433h3v1h-3zM37 433h3v1h-3zM43 433h3v1h-3zM49 433h3v1h-3zM55 433h3v1h-3zM61 433h3v1h-3zM67 433h3v1h-3zM73 433h3v1h-3zM79 433h3v1h-3zM85 433h3v1h-3zM91 433h3v1h-3zM97 433h3v1h-3zM103 433h3v1h-3zM109 433h3v1h-3zM115 433h3v1h-3zM121 433h3v1h-3zM127 433h3v1h-3zM133 433h3v1h-3zM139 433h3v1h-3zM145 433h3v1h-3zM151 433h3v1h-3zM157 433h3v1h-3zM163 433h3v1h-3zM169 433h3v1h-3zM175 433h3v1h-3zM181 433h3v1h-3zM187 433h3v1h-3zM193 433h3v1h-3zM199 433h3v1h-3zM205 433h3v1h-3zM211 433h3v1h-3zM217 433h3v1h-3zM223 433h3v1h-3zM229 433h3v1h-3zM235 433h3v1h-3zM241 433h3v1h-3zM247 433h3v1h-3zM253 433h3v1h-3zM259 433h3v1h-3zM265 433h3v1h-3zM271 433h3v1h-3zM277 433h3v1h-3zM283 433h3v1h-3zM289 433h3v1h-3zM295 433h3v1h-3zM301 433h3v1h-3zM307 433h3v1h-3zM313 433h3v1h-3zM319 433h3v1h-3zM325 433h3v1h-3zM331 433h3v1h-3zM337 433h3v1h-3zM343 433h3v1h-3zM349 433h3v1h-3zM355 433h3v1h-3zM361 433h3v1h-3zM367 433h3v1h-3zM373 433h3v1h-3zM379 433h3v1h-3zM385 433h3v1h-3zM391 433h3v1h-3zM397 433h3v1h-3zM403 433h3v1h-3zM409 433h3v1h-3zM415 433h3v1h-3zM421 433h3v1h-3zM427 433h3v1h-3zM433 433h3v1h-3zM439 433h3v1h-3zM445 433h3v1h-3zM451 433h3v1h-3zM457 433h3v1h-3zM463 433h3v1h-3zM469 433h3v1h-3zM475 433h3v1h-3zM481 433h3v1h-3zM487 433h3v1h-3zM493 433h3v1h-3zM499 433h3v1h-3zM505 433h3v1h-3zM511 433h3v1h-3zM517 433h3v1h-3zM523 433h3v1h-3zM529 433h3v1h-3zM535 433h3v1h-3zM541 433h3v1h-3zM547 433h3v1h-3zM553 433h3v1h-3zM559 433h3v1h-3zM565 433h3v1h-3zM571 433h3v1h-3zM577 433h3v1h-3zM583 433h3v1h-3zM589 433h3v1h-3zM595 433h3v1h-3zM601 433h3v1h-3zM607 433h3v1h-3zM613 433h3v1h-3zM619 433h3v1h-3zM625 433h3v1h-3zM631 433h3v1h-3zM637 433h3v1h-3zM643 433h3v1h-3zM649 433h3v1h-3zM655 433h3v1h-3zM661 433h3v1h-3zM667 433h3v1h-3zM673 433h3v1h-3zM13 450h3v1h-3zM19 450h3v1h-3zM25 450h3v1h-3zM31 450h3v1h-3zM37 450h3v1h-3zM43 450h3v1h-3zM49 450h3v1h-3zM55 450h3v1h-3zM61 450h3v1h-3zM67 450h3v1h-3zM73 450h3v1h-3zM79 450h3v1h-3zM85 450h3v1h-3zM91 450h3v1h-3zM97 450h3v1h-3zM103 450h3v1h-3zM109 450h3v1h-3zM115 450h3v1h-3zM121 450h3v1h-3zM127 450h3v1h-3zM133 450h3v1h-3zM139 450h3v1h-3zM145 450h3v1h-3zM151 450h3v1h-3zM157 450h3v1h-3zM163 450h3v1h-3zM169 450h3v1h-3zM175 450h3v1h-3zM181 450h3v1h-3zM187 450h3v1h-3zM193 450h3v1h-3zM199 450h3v1h-3zM205 450h3v1h-3zM211 450h3v1h-3zM217 450h3v1h-3zM223 450h3v1h-3zM229 450h3v1h-3zM235 450h3v1h-3zM241 450h3v1h-3zM247 450h3v1h-3zM253 450h3v1h-3zM259 450h3v1h-3zM265 450h3v1h-3zM271 450h3v1h-3zM277 450h3v1h-3zM283 450h3v1h-3zM289 450h3v1h-3zM295 450h3v1h-3zM301 450h3v1h-3zM307 450h3v1h-3zM313 450h3v1h-3zM319 450h3v1h-3zM325 450h3v1h-3zM331 450h3v1h-3zM337 450h3v1h-3zM343 450h3v1h-3zM349 450h3v1h-3zM355 450h3v1h-3zM361 450h3v1h-3zM367 450h3v1h-3zM373 450h3v1h-3zM379 450h3v1h-3zM385 450h3v1h-3zM391 450h3v1h-3zM397 450h3v1h-3zM403 450h3v1h-3zM409 450h3v1h-3zM415 450h3v1h-3zM421 450h3v1h-3zM427 450h3v1h-3zM433 450h3v1h-3zM439 450h3v1h-3zM445 450h3v1h-3zM451 450h3v1h-3zM457 450h3v1h-3zM463 450h3v1h-3zM469 450h3v1h-3zM475 450h3v1h-3zM481 450h3v1h-3zM487 450h3v1h-3zM493 450h3v1h-3zM499 450h3v1h-3zM505 450h3v1h-3zM511 450h3v1h-3zM517 450h3v1h-3zM523 450h3v1h-3zM529 450h3v1h-3zM535 450h3v1h-3zM541 450h3v1h-3zM547 450h3v1h-3zM553 450h3v1h-3zM559 450h3v1h-3zM565 450h3v1h-3zM571 450h3v1h-3zM577 450h3v1h-3zM583 450h3v1h-3zM589 450h3v1h-3zM595 450h3v1h-3zM601 450h3v1h-3zM607 450h3v1h-3zM613 450h3v1h-3zM619 450h3v1h-3zM625 450h3v1h-3zM631 450h3v1h-3zM637 450h3v1h-3zM643 450h3v1h-3zM649 450h3v1h-3zM655 450h3v1h-3zM661 450h3v1h-3zM667 450h3v1h-3zM673 450h3v1h-3zM13 467h3v1h-3zM19 467h3v1h-3zM25 467h3v1h-3zM31 467h3v1h-3zM37 467h3v1h-3zM43 467h3v1h-3zM49 467h3v1h-3zM55 467h3v1h-3zM61 467h3v1h-3zM67 467h3v1h-3zM73 467h3v1h-3zM79 467h3v1h-3zM85 467h3v1h-3zM91 467h3v1h-3zM97 467h3v1h-3zM103 467h3v1h-3zM109 467h3v1h-3zM115 467h3v1h-3zM121 467h3v1h-3zM127 467h3v1h-3zM133 467h3v1h-3zM139 467h3v1h-3zM145 467h3v1h-3zM151 467h3v1h-3zM157 467h3v1h-3zM163 467h3v1h-3zM169 467h3v1h-3zM175 467h3v1h-3zM181 467h3v1h-3zM187 467h3v1h-3zM193 467h3v1h-3zM199 467h3v1h-3zM205 467h3v1h-3zM211 467h3v1h-3zM217 467h3v1h-3zM223 467h3v1h-3zM229 467h3v1h-3zM235 467h3v1h-3zM241 467h3v1h-3zM247 467h3v1h-3zM253 467h3v1h-3zM259 467h3v1h-3zM265 467h3v1h-3zM271 467h3v1h-3zM277 467h3v1h-3zM283 467h3v1h-3zM289 467h3v1h-3zM295 467h3v1h-3zM301 467h3v1h-3zM307 467h3v1h-3zM313 467h3v1h-3zM319 467h3v1h-3zM325 467h3v1h-3zM331 467h3v1h-3zM337 467h3v1h-3zM343 467h3v1h-3zM349 467h3v1h-3zM355 467h3v1h-3zM361 467h3v1h-3zM367 467h3v1h-3zM373 467h3v1h-3zM379 467h3v1h-3zM385 467h3v1h-3zM391 467h3v1h-3zM397 467h3v1h-3zM403 467h3v1h-3zM409 467h3v1h-3zM415 467h3v1h-3zM421 467h3v1h-3zM427 467h3v1h-3zM433 467h3v1h-3zM439 467h3v1h-3zM445 467h3v1h-3zM451 467h3v1h-3zM457 467h3v1h-3zM463 467h3v1h-3zM469 467h3v1h-3zM475 467h3v1h-3zM481 467h3v1h-3zM487 467h3v1h-3zM493 467h3v1h-3zM499 467h3v1h-3zM505 467h3v1h-3zM511 467h3v1h-3zM517 467h3v1h-3zM523 467h3v1h-3zM529 467h3v1h-3zM535 467h3v1h-3zM541 467h3v1h-3zM547 467h3v1h-3zM553 467h3v1h-3zM559 467h3v1h-3zM565 467h3v1h-3zM571 467h3v1h-3zM577 467h3v1h-3zM583 467h3v1h-3zM589 467h3v1h-3zM595 467h3v1h-3zM601 467h3v1h-3zM607 467h3v1h-3zM613 467h3v1h-3zM619 467h3v1h-3zM625 467h3v1h-3zM631 467h3v1h-3zM637 467h3v1h-3zM643 467h3v1h-3zM649 467h3v1h-3zM655 467h3v1h-3zM661 467h3v1h-3zM667 467h3v1h-3zM673 467h3v1h-3zM13 484h3v1h-3zM19 484h3v1h-3zM25 484h3v1h-3zM31 484h3v1h-3zM37 484h3v1h-3zM43 484h3v1h-3zM49 484h3v1h-3zM55 484h3v1h-3zM61 484h3v1h-3zM67 484h3v1h-3zM73 484h3v1h-3zM79 484h3v1h-3zM85 484h3v1h-3zM91 484h3v1h-3zM97 484h3v1h-3zM103 484h3v1h-3zM109 484h3v1h-3zM115 484h3v1h-3zM121 484h3v1h-3zM127 484h3v1h-3zM133 484h3v1h-3zM139 484h3v1h-3zM145 484h3v1h-3zM151 484h3v1h-3zM157 484h3v1h-3zM163 484h3v1h-3zM169 484h3v1h-3zM175 484h3v1h-3zM181 484h3v1h-3zM187 484h3v1h-3zM193 484h3v1h-3zM199 484h3v1h-3zM205 484h3v1h-3zM211 484h3v1h-3zM217 484h3v1h-3zM223 484h3v1h-3zM229 484h3v1h-3zM235 484h3v1h-3zM241 484h3v1h-3zM247 484h3v1h-3zM253 484h3v1h-3zM259 484h3v1h-3zM265 484h3v1h-3zM271 484h3v1h-3zM277 484h3v1h-3zM283 484h3v1h-3zM289 484h3v1h-3zM295 484h3v1h-3zM301 484h3v1h-3zM307 484h3v1h-3zM313 484h3v1h-3zM319 484h3v1h-3zM325 484h3v1h-3zM331 484h3v1h-3zM337 484h3v1h-3zM343 484h3v1h-3zM349 484h3v1h-3zM355 484h3v1h-3zM361 484h3v1h-3zM367 484h3v1h-3zM373 484h3v1h-3zM379 484h3v1h-3zM385 484h3v1h-3zM391 484h3v1h-3zM397 484h3v1h-3zM403 484h3v1h-3zM409 484h3v1h-3zM415 484h3v1h-3zM421 484h3v1h-3zM427 484h3v1h-3zM433 484h3v1h-3zM439 484h3v1h-3zM445 484h3v1h-3zM451 484h3v1h-3zM457 484h3v1h-3zM463 484h3v1h-3zM469 484h3v1h-3zM475 484h3v1h-3zM481 484h3v1h-3zM487 484h3v1h-3zM493 484h3v1h-3zM499 484h3v1h-3zM505 484h3v1h-3zM511 484h3v1h-3zM517 484h3v1h-3zM523 484h3v1h-3zM529 484h3v1h-3zM535 484h3v1h-3zM541 484h3v1h-3zM547 484h3v1h-3zM553 484h3v1h-3zM559 484h3v1h-3zM565 484h3v1h-3zM571 484h3v1h-3zM577 484h3v1h-3zM583 484h3v1h-3zM589 484h3v1h-3zM595 484h3v1h-3zM601 484h3v1h-3zM607 484h3v1h-3zM613 484h3v1h-3zM619 484h3v1h-3zM625 484h3v1h-3zM631 484h3v1h-3zM637 484h3v1h-3zM643 484h3v1h-3zM649 484h3v1h-3zM655 484h3v1h-3zM661 484h3v1h-3zM667 484h3v1h-3zM673 484h3v1h-3z" fill="#c0c0c0"/><g clip-path="url(#cmain)"><path d="M10 319h5v12h-5z M11 320v10h3v-10zM12 316h1v3h-1zM18 330h5v34h-5z M19 331v32h3v-32zM20 320h1v10h-1zM20 364h1v2h-1zM26 360h5v3h-5z M27 361v1h3v-1zM28 346h1v14h-1zM28 363h1v1h-1zM34 351h5v11h-5z M35 352v9h3v-9zM36 346h1v5h-1zM36 362h1v6h-1zM42 347h5v4h-5z M43 348v2h3v-2zM44 338h1v9h-1zM44 351h1v9h-1zM50 327h5v21h-5z M51 328v19h3v-19zM52 316h1v11h-1zM58 327h5v24h-5z M59 328v22h3v-22zM60 325h1v2h-1zM66 344h5v6h-5z M67 345v4h3v-4zM68 333h1v11h-1zM68 350h1v1h-1zM74 345h5v1h-5zM76 340h1v5h-1zM76 346h1v9h-1zM82 339h5v8h-5z M83 340v6h3v-6zM90 327h5v12h-5z M91 328v10h3v-10zM98 309h5v20h-5z M99 310v18h3v-18zM100 295h1v14h-1zM100 329h1v6h-1zM106 302h5v8h-5z M107 303v6h3v-6zM108 288h1v14h-1zM108 310h1v14h-1zM114 276h5v26h-5z M115 277v24h3v-24zM116 269h1v7h-1zM116 302h1v1h-1zM122 276h5v7h-5z M123 277v5h3v-5zM124 273h1v3h-1zM124 283h1v13h-1zM130 282h5v2h-5zM132 271h1v11h-1zM132 284h1v6h-1zM138 283h5v5h-5z M139 284v3h3v-3zM140 279h1v4h-1zM140 288h1v16h-1zM146 263h5v24h-5z M147 264v22h3v-22zM148 251h1v12h-1zM148 287h1v4h-1zM154 263h5v21h-5z M155 264v19h3v-19zM156 242h1v21h-1zM156 284h1v7h-1zM162 260h5v23h-5z M163 261v21h3v-21zM164 235h1v25h-1zM164 283h1v15h-1zM170 250h5v11h-5z M171 251v9h3v-9zM172 230h1v20h-1zM172 261h1v8h-1zM178 243h5v7h-5z M179 244v5h3v-5zM180 237h1v6h-1zM180 250h1v23h-1zM186 243h5v2h-5zM188 232h1v11h-1zM188 245h1v5h-1zM194 232h5v12h-5z M195 233v10h3v-10zM196 224h1v8h-1zM196 244h1v1h-1zM202 232h5v2h-5zM204 228h1v4h-1zM204 234h1v2h-1zM210 232h5v23h-5z M211 233v21h3v-21zM212 255h1v2h-1zM218 251h5v4h-5z M219 252v2h3v-2zM220 240h1v11h-1zM220 255h1v1h-1zM226 236h5v16h-5z M227 237v14h3v-14zM228 233h1v3h-1zM228 252h1v11h-1zM234 227h5v11h-5z M235 228v9h3v-9zM236 222h1v5h-1zM242 227h5v35h-5z M243 228v33h3v-33zM244 208h1v19h-1zM250 261h5v4h-5z M251 262v2h3v-2zM252 239h1v22h-1zM258 256h5v10h-5z M259 257v8h3v-8zM260 251h1v5h-1zM266 256h5v18h-5z M267 257v16h3v-16zM268 251h1v5h-1zM274 273h5v8h-5z M275 274v6h3v-6zM276 281h1v5h-1zM282 252h5v28h-5z M283 253v26h3v-26zM284 231h1v21h-1zM290 253h5v3h-5z M291 254v1h3v-1zM292 242h1v11h-1zM298 254h5v9h-5z M299 255v7h3v-7zM300 250h1v4h-1zM306 252h5v11h-5z M307 253v9h3v-9zM308 250h1v2h-1zM314 250h5v4h-5z M315 251v2h3v-2zM316 246h1v4h-1zM322 250h5v12h-5z M323 251v10h3v-10zM330 256h5v6h-5z M331 257v4h3v-4zM338 253h5v4h-5z M339 254v2h3v-2zM340 249h1v4h-1zM346 253h5v10h-5z M347 254v8h3v-8zM354 262h5v3h-5zM362 257h5v7h-5z M363 258v5h3v-5zM370 257h5v10h-5z M371 258v8h3v-8zM378 266h5v5h-5z M379 267v3h3v-3zM380 271h1v2h-1zM386 270h5v4h-5z M387 271v2h3v-2zM388 268h1v2h-1zM388 274h1v5h-1zM394 260h5v9h-5z M395 261v7h3v-7zM396 254h1v6h-1zM402 259h5v12h-5z M403 260v10h3v-10zM404 247h1v12h-1zM404 271h1v12h-1zM410 245h5v26h-5z M411 246v24h3v-24zM412 240h1v5h-1zM412 271h1v7h-1zM418 244h5v4h-5z M419 245v2h3v-2zM420 248h1v10h-1zM426 245h5v4h-5z M427 246v2h3v-2zM428 240h1v5h-1zM428 249h1v4h-1zM434 239h5v9h-5z M435 240v7h3v-7zM436 238h1v1h-1zM436 248h1v2h-1zM442 227h5v14h-5z M443 228v12h3v-12zM444 222h1v5h-1zM444 241h1v7h-1zM450 227h5v13h-5z M451 228v11h3v-11zM452 223h1v4h-1zM452 240h1v1h-1zM458 224h5v17h-5z M459 225v15h3v-15zM460 219h1v5h-1zM460 241h1v6h-1zM466 225h5v2h-5zM468 216h1v9h-1zM468 227h1v6h-1zM474 167h5v60h-5z M475 168v58h3v-58zM476 159h1v8h-1zM482 153h5v15h-5z M483 154v13h3v-13zM484 143h1v10h-1zM484 168h1v8h-1zM490 150h5v4h-5z M491 151v2h3v-2zM492 148h1v2h-1zM492 154h1v21h-1zM498 150h5v5h-5z M499 151v3h3v-3zM500 146h1v4h-1zM500 155h1v14h-1zM506 132h5v22h-5z M507 133v20h3v-20zM508 126h1v6h-1zM508 154h1v2h-1zM514 125h5v8h-5z M515 126v6h3v-6zM516 122h1v3h-1zM516 133h1v1h-1zM522 126h5v6h-5z M523 127v4h3v-4zM524 112h1v14h-1zM524 132h1v15h-1zM530 77h5v55h-5z M531 78v53h3v-53zM532 72h1v5h-1zM532 132h1v3h-1zM538 76h5v12h-5z M539 77v10h3v-10zM540 66h1v10h-1zM540 88h1v10h-1zM546 71h5v18h-5z M547 72v16h3v-16zM548 65h1v6h-1zM548 89h1v2h-1zM554 70h5v2h-5zM556 64h1v6h-1zM556 72h1v15h-1zM562 68h5v3h-5z M563 69v1h3v-1zM564 66h1v2h-1zM564 71h1v5h-1zM570 67h5v12h-5z M571 68v10h3v-10zM572 79h1v4h-1zM578 78h5v7h-5z M579 79v5h3v-5zM580 67h1v11h-1zM586 84h5v4h-5z M587 85v2h3v-2zM588 76h1v8h-1zM588 88h1v3h-1zM594 87h5v23h-5z M595 88v21h3v-21zM596 74h1v13h-1zM596 110h1v3h-1zM602 70h5v40h-5z M603 71v38h3v-38zM604 52h1v18h-1zM604 110h1v12h-1zM610 71h5v7h-5z M611 72v5h3v-5zM612 68h1v3h-1zM612 78h1v15h-1zM618 76h5v11h-5z M619 77v9h3v-9zM620 69h1v7h-1zM620 87h1v2h-1zM626 73h5v14h-5z M627 74v12h3v-12zM628 61h1v12h-1zM634 73h5v13h-5z M635 74v11h3v-11zM636 86h1v8h-1zM642 79h5v8h-5z M643 80v6h3v-6zM644 74h1v5h-1zM644 87h1v16h-1zM650 68h5v12h-5z M651 69v10h3v-10zM652 65h1v3h-1zM652 80h1v7h-1zM658 68h5v21h-5z M659 69v19h3v-19zM660 67h1v1h-1zM660 89h1v6h-1zM666 88h5v15h-5z M667 89v13h3v-13zM668 80h1v8h-1zM674 102h5v7h-5z M675 103v5h3v-5zM676 109h1v16h-1z" fill="#00ff00" fill-rule="evenodd"/><path d="M11 320h3v10h-3zM19 331h3v32h-3zM59 328h3v22h-3zM123 277h3v5h-3zM139 284h3v3h-3zM155 264h3v19h-3zM211 233h3v21h-3zM243 228h3v33h-3zM251 262h3v2h-3zM267 257h3v16h-3zM275 274h3v6h-3zM299 255h3v7h-3zM323 251h3v10h-3zM347 254h3v8h-3zM371 258h3v8h-3zM379 267h3v3h-3zM387 271h3v2h-3zM403 260h3v10h-3zM419 245h3v2h-3zM427 246h3v2h-3zM451 228h3v11h-3zM499 151h3v3h-3zM523 127h3v4h-3zM539 77h3v10h-3zM571 68h3v10h-3zM579 79h3v5h-3zM587 85h3v2h-3zM595 88h3v21h-3zM611 72h3v5h-3zM619 77h3v9h-3zM635 74h3v11h-3zM659 69h3v19h-3zM667 89h3v13h-3zM675 103h3v5h-3z" fill="#ffffff"/><path d="M27 361h3v1h-3zM35 352h3v9h-3zM43 348h3v2h-3zM51 328h3v19h-3zM67 345h3v4h-3zM83 340h3v6h-3zM91 328h3v10h-3zM99 310h3v18h-3zM107 303h3v6h-3zM115 277h3v24h-3zM147 264h3v22h-3zM163 261h3v21h-3zM171 251h3v9h-3zM179 244h3v5h-3zM195 233h3v10h-3zM219 252h3v2h-3zM227 237h3v14h-3zM235 228h3v9h-3zM259 257h3v8h-3zM283 253h3v26h-3zM291 254h3v1h-3zM307 253h3v9h-3zM315 251h3v2h-3zM331 257h3v4h-3zM339 254h3v2h-3zM363 258h3v5h-3zM395 261h3v7h-3zM411 246h3v24h-3zM435 240h3v7h-3zM443 228h3v12h-3zM459 225h3v15h-3zM475 168h3v58h-3zM483 154h3v13h-3zM491 151h3v2h-3zM507 133h3v20h-3zM515 126h3v6h-3zM531 78h3v53h-3zM547 72h3v16h-3zM563 69h3v1h-3zM603 71h3v38h-3zM627 74h3v12h-3zM643 80h3v6h-3zM651 69h3v10h-3z" fill="#000000"/><path d="M12 318h1v38h-1z M10 338h5v6h-5zM20 320h1v36h-1z M18 338h5v4h-5zM28 334h1v8h-1z M26 338h5v2h-5zM100 335h1v11h-1z M98 340h5v2h-5zM108 327h1v22h-1z M106 337h5v4h-5zM116 329h1v21h-1z M114 335h5v6h-5zM124 320h1v27h-1z M122 332h5v7h-5zM132 314h1v29h-1z M130 328h5v8h-5zM140 310h1v29h-1z M138 324h5v8h-5zM148 307h1v28h-1z M146 321h5v8h-5zM156 303h1v29h-1z M154 317h5v8h-5zM164 298h1v31h-1z M162 313h5v9h-5zM172 293h1v32h-1z M170 309h5v9h-5zM180 288h1v34h-1z M178 305h5v9h-5zM188 283h1v34h-1z M186 300h5v10h-5zM196 279h1v33h-1z M194 295h5v10h-5zM204 275h1v32h-1z M202 290h5v11h-5zM212 271h1v30h-1z M210 286h5v10h-5zM220 268h1v29h-1z M218 282h5v10h-5zM228 265h1v29h-1z M226 279h5v8h-5zM236 262h1v28h-1z M234 276h5v8h-5zM244 258h1v30h-1z M242 273h5v7h-5zM252 255h1v30h-1z M250 271h5v6h-5zM260 254h1v30h-1z M258 269h5v6h-5zM268 252h1v31h-1z M266 268h5v4h-5zM276 254h1v30h-1z M274 268h5v3h-5zM284 255h1v27h-1z M282 268h5v2h-5zM292 255h1v27h-1z M290 268h5v2h-5zM300 251h1v30h-1z M298 267h5v2h-5zM308 251h1v29h-1z M306 266h5v3h-5zM316 250h1v29h-1z M314 265h5v3h-5zM324 250h1v28h-1z M322 265h5v2h-5zM332 250h1v27h-1z M330 264h5v2h-5zM340 250h1v27h-1z M338 263h5v3h-5zM348 251h1v25h-1z M346 263h5v2h-5zM356 251h1v24h-1z M354 263h5v2h-5zM364 250h1v25h-1z M362 263h5v1h-5zM372 251h1v23h-1z M370 262h5v2h-5zM380 260h1v6h-1z M378 263h5v1h-5zM420 258h1v11h-1z M418 262h5v2h-5zM428 253h1v19h-1z M426 262h5v2h-5zM436 250h1v23h-1z M434 261h5v2h-5zM444 248h1v24h-1z M442 259h5v3h-5zM452 245h1v25h-1z M450 257h5v4h-5zM460 242h1v28h-1z M458 255h5v4h-5zM468 238h1v27h-1z M466 253h5v6h-5zM476 239h1v24h-1z M474 250h5v6h-5zM484 233h1v25h-1z M482 245h5v9h-5zM492 226h1v26h-1z M490 239h5v11h-5zM500 220h1v27h-1z M498 232h5v13h-5zM508 213h1v27h-1z M506 225h5v14h-5zM516 206h1v27h-1z M514 218h5v15h-5zM524 199h1v27h-1z M522 211h5v15h-5zM532 191h1v28h-1z M530 204h5v15h-5zM540 182h1v30h-1z M538 195h5v17h-5zM548 173h1v31h-1z M546 186h5v18h-5zM556 164h1v33h-1z M554 178h5v18h-5zM564 156h1v31h-1z M562 169h5v18h-5zM572 148h1v31h-1z M570 161h5v18h-5zM580 141h1v29h-1z M578 154h5v16h-5zM588 135h1v27h-1z M586 147h5v15h-5zM596 130h1v26h-1z M594 142h5v13h-5zM604 125h1v27h-1z M602 138h5v11h-5zM612 120h1v28h-1z M610 133h5v11h-5zM620 115h1v29h-1z M618 129h5v10h-5zM628 111h1v28h-1z M626 125h5v10h-5zM636 107h1v29h-1z M634 121h5v9h-5zM644 101h1v30h-1z M642 118h5v8h-5zM652 100h1v29h-1z M650 115h5v8h-5zM660 99h1v27h-1z M658 112h5v7h-5zM668 97h1v27h-1z M666 109h5v7h-5zM676 95h1v28h-1z M674 108h5v5h-5z" fill="#00ffff"/><path d="M36 333h1v13h-1z M34 339h5v2h-5zM44 328h1v26h-1z M42 339h5v2h-5zM52 325h1v32h-1z M50 340h5v2h-5zM60 337h1v7h-1z M58 340h5v2h-5zM68 334h1v13h-1z M66 340h5v2h-5zM76 332h1v18h-1z M74 340h5v2h-5zM84 330h1v23h-1z M82 340h5v2h-5zM92 338h1v7h-1z M90 340h5v2h-5zM388 259h1v9h-1z M386 263h5v1h-5zM396 255h1v17h-1z M394 263h5v1h-5zM404 253h1v22h-1z M402 263h5v1h-5zM412 262h1v4h-1z M410 263h5v1h-5z" fill="#ff0000"/><polygon points="107.80,331.00 109.50,335.36 114.12,334.65 111.20,338.30 114.12,341.95 109.50,341.24 107.80,345.60 106.10,341.24 101.48,341.95 104.40,338.30 101.48,334.65 106.10,335.36" fill="#ff1493" shape-rendering="auto"/><polygon points="444.20,255.90 445.90,260.26 450.52,259.55 447.60,263.20 450.52,266.85 445.90,266.14 444.20,270.50 442.50,266.14 437.88,266.85 440.80,263.20 437.88,259.55 442.50,260.26" fill="#ff1493" shape-rendering="auto"/><polygon points="460.20,254.10 461.90,258.46 466.52,257.75 463.60,261.40 466.52,265.05 461.90,264.34 460.20,268.70 458.50,264.34 453.88,265.05 456.80,261.40 453.88,257.75 458.50,258.46" fill="#ff1493" shape-rendering="auto"/><polygon points="116.20,307.80 126.00,317.20 126.00,320.30 118.15,312.70 118.15,329.00 114.25,329.00 114.25,312.70 106.40,320.30 106.40,317.20" fill="#ff1493" shape-rendering="auto"/><polygon points="452.20,245.60 462.00,255.00 462.00,258.10 454.15,250.50 454.15,266.80 450.25,266.80 450.25,250.50 442.40,258.10 442.40,255.00" fill="#ff1493" shape-rendering="auto"/><polygon points="468.20,237.80 478.00,247.20 478.00,250.30 470.15,242.70 470.15,259.00 466.25,259.00 466.25,242.70 458.40,250.30 458.40,247.20" fill="#ff1493" shape-rendering="auto"/></g><g clip-path="url(#crsi)"><polyline points="12.5,461.4 20.5,472.7 28.5,472.7 36.5,468.2 44.5,467.5 52.5,459.7 60.5,467.8 68.5,466.9 76.5,466.9 84.5,464.6 92.5,459.4 100.5,451.5 108.5,449.6 116.5,440.7 124.5,443.8 132.5,444.2 140.5,445.8 148.5,438.8 156.5,449.9 164.5,441.7 172.5,439.3 180.5,437.4 188.5,436.7 196.5,434.3 204.5,433.6 212.5,448.8 220.5,448.8 228.5,442 236.5,438.3 244.5,460.5 252.5,460.5 260.5,457.4 268.5,466.9 276.5,470 284.5,456.7 292.5,457 300.5,461.8 308.5,457.8 316.5,457.8 324.5,462.8 332.5,460.1 340.5,460.1 348.5,464.6 356.5,464.6 364.5,462.8 372.5,468.2 380.5,470 388.5,473 396.5,463.8 404.5,470 412.5,454.6 420.5,456.5 428.5,456.5 436.5,451.4 444.5,445.7 452.5,455.1 460.5,448 468.5,448 476.5,427.4 484.5,423.3 492.5,423 500.5,425.8 508.5,419.9 516.5,418.9 524.5,424.4 532.5,413.7 540.5,419.9 548.5,417.6 556.5,416.7 564.5,416.7 572.5,424 580.5,429.5 588.5,431.3 596.5,446.6 604.5,435 612.5,439.1 620.5,443.9 628.5,439.8 636.5,446.6 644.5,445.5 652.5,441.8 660.5,452.8 668.5,459 676.5,464.7" fill="none" stroke="#ff4500" stroke-width="2" stroke-linejoin="round"/></g><path d="M11 34h668v1h-668z M11 34h1v346h-1z M678 34h1v346h-1z M11 379h668v1h-668z" fill="#fff"/><path d="M11 381h668v1h-668z M11 381h1v172h-1z M678 381h1v172h-1z M11 552h668v1h-668z" fill="#fff"/><path d="M679 36h2v1h-2zM679 69h2v1h-2zM679 103h2v1h-2zM679 137h2v1h-2zM679 171h2v1h-2zM679 205h2v1h-2zM679 239h2v1h-2zM679 273h2v1h-2zM679 307h2v1h-2zM679 341h2v1h-2zM679 375h2v1h-2zM679 383h1v1h-1zM12 553h1v3h-1zM76 553h1v3h-1zM140 553h1v3h-1zM204 553h1v3h-1zM268 553h1v3h-1zM332 553h1v3h-1zM396 553h1v3h-1zM460 553h1v3h-1zM524 553h1v3h-1zM588 553h1v3h-1zM652 553h1v3h-1z" fill="#fff"/><polygon points="12,547 12,552 17,552" fill="#778899"/><g font-family='"Liberation Sans", sans-serif' stroke="#fff" stroke-width="0.12" shape-rendering="auto"><text x="684.5" y="39.6" font-size="9.8" fill="#fff" text-anchor="start" textLength="32.5" lengthAdjust="spacingAndGlyphs">114.990</text><text x="684.5" y="72.6" font-size="9.8" fill="#fff" text-anchor="start" textLength="32.5" lengthAdjust="spacingAndGlyphs">114.895</text><text x="684.5" y="106.6" font-size="9.8" fill="#fff" text-anchor="start" textLength="32.5" lengthAdjust="spacingAndGlyphs">114.800</text><text x="684.5" y="140.6" font-size="9.8" fill="#fff" text-anchor="start" textLength="32.5" lengthAdjust="spacingAndGlyphs">114.705</text><text x="684.5" y="174.6" font-size="9.8" fill="#fff" text-anchor="start" textLength="32.5" lengthAdjust="spacingAndGlyphs">114.610</text><text x="684.5" y="208.6" font-size="9.8" fill="#fff" text-anchor="start" textLength="32.5" lengthAdjust="spacingAndGlyphs">114.515</text><text x="684.5" y="242.6" font-size="9.8" fill="#fff" text-anchor="start" textLength="32.5" lengthAdjust="spacingAndGlyphs">114.420</text><text x="684.5" y="276.6" font-size="9.8" fill="#fff" text-anchor="start" textLength="32.5" lengthAdjust="spacingAndGlyphs">114.325</text><text x="684.5" y="310.6" font-size="9.8" fill="#fff" text-anchor="start" textLength="32.5" lengthAdjust="spacingAndGlyphs">114.230</text><text x="684.5" y="344.6" font-size="9.8" fill="#fff" text-anchor="start" textLength="32.5" lengthAdjust="spacingAndGlyphs">114.135</text><text x="684.5" y="378.6" font-size="9.8" fill="#fff" text-anchor="start" textLength="32.5" lengthAdjust="spacingAndGlyphs">114.040</text><text x="683" y="391" font-size="9.8" fill="#fff" text-anchor="start" textLength="15.03125" lengthAdjust="spacingAndGlyphs">100</text><text x="681" y="437" font-size="9.8" fill="#fff" text-anchor="start" textLength="10.015625" lengthAdjust="spacingAndGlyphs">70</text><text x="681" y="454" font-size="9.8" fill="#fff" text-anchor="start" textLength="10.015625" lengthAdjust="spacingAndGlyphs">60</text><text x="681" y="471" font-size="9.8" fill="#fff" text-anchor="start" textLength="10.015625" lengthAdjust="spacingAndGlyphs">50</text><text x="681" y="488" font-size="9.8" fill="#fff" text-anchor="start" textLength="10.015625" lengthAdjust="spacingAndGlyphs">40</text><text x="682" y="549" font-size="9.8" fill="#fff" text-anchor="start" textLength="5.015625" lengthAdjust="spacingAndGlyphs">0</text><text x="11.5" y="565" font-size="9.8" fill="#fff" text-anchor="start" textLength="51.046875" lengthAdjust="spacingAndGlyphs">22 Dec 2021</text><text x="75.5" y="565" font-size="9.8" fill="#fff" text-anchor="start" textLength="54.3" lengthAdjust="spacingAndGlyphs">23 Dec 05:00</text><text x="139.5" y="565" font-size="9.8" fill="#fff" text-anchor="start" textLength="53.546875" lengthAdjust="spacingAndGlyphs">23 Dec 13:00</text><text x="203.5" y="565" font-size="9.8" fill="#fff" text-anchor="start" textLength="53.546875" lengthAdjust="spacingAndGlyphs">23 Dec 21:00</text><text x="267.5" y="565" font-size="9.8" fill="#fff" text-anchor="start" textLength="53.546875" lengthAdjust="spacingAndGlyphs">24 Dec 05:00</text><text x="331.5" y="565" font-size="9.8" fill="#fff" text-anchor="start" textLength="53.546875" lengthAdjust="spacingAndGlyphs">24 Dec 13:00</text><text x="395.5" y="565" font-size="9.8" fill="#fff" text-anchor="start" textLength="53.546875" lengthAdjust="spacingAndGlyphs">27 Dec 00:00</text><text x="459.5" y="565" font-size="9.8" fill="#fff" text-anchor="start" textLength="53.546875" lengthAdjust="spacingAndGlyphs">27 Dec 08:00</text><text x="523.5" y="565" font-size="9.8" fill="#fff" text-anchor="start" textLength="53.546875" lengthAdjust="spacingAndGlyphs">27 Dec 16:00</text><text x="587.5" y="565" font-size="9.8" fill="#fff" text-anchor="start" textLength="53.546875" lengthAdjust="spacingAndGlyphs">28 Dec 00:00</text><text x="651.5" y="565" font-size="9.8" fill="#fff" text-anchor="start" textLength="53.546875" lengthAdjust="spacingAndGlyphs">28 Dec 08:00</text><text x="27.3" y="46" font-size="9" fill="#fff" textLength="50" lengthAdjust="spacingAndGlyphs">USDJPY,H1</text><text x="85" y="46" font-size="9.8" fill="#fff" text-anchor="start" textLength="32.546875" lengthAdjust="spacingAndGlyphs">144.935</text><text x="121" y="46" font-size="9.8" fill="#fff" text-anchor="start" textLength="32.546875" lengthAdjust="spacingAndGlyphs">144.942</text><text x="157" y="46" font-size="9.8" fill="#fff" text-anchor="start" textLength="32.546875" lengthAdjust="spacingAndGlyphs">144.904</text><text x="193" y="46" font-size="9.8" fill="#fff" text-anchor="start" textLength="32.546875" lengthAdjust="spacingAndGlyphs">144.936</text><text x="16" y="394" font-size="9.8" fill="#fff" text-anchor="start" textLength="67.3" lengthAdjust="spacingAndGlyphs">RSI(14) 64.5210</text></g><polygon points="14.5,41 22,41 18.25,45" fill="#fff" shape-rendering="auto"/>
<!-- title -->
<g shape-rendering="auto">
<text x="29.7" y="23" font-family='"Liberation Sans", sans-serif' font-size="11" fill="#0e0e30" stroke="#0e0e30" stroke-width="0.2" textLength="55.3" lengthAdjust="spacingAndGlyphs">USDJPY,H1</text>
</g>
<!-- icon -->
<g shape-rendering="crispEdges">
<rect x="10" y="11" width="12" height="9" fill="#4d8cf2"/>
<path d="M11 11h1v1h-1zM15 11h1v1h-1zM19 11h1v1h-1zM10 14h1v1h-1zM10 17h1v1h-1z" fill="#5aa07a"/>
<rect x="11" y="13" width="10" height="6" fill="#fffff4"/>
<path d="M12 15h1v1h-1zM13 14h1v1h-1zM16 14h1v2h-1zM17 15h1v1h-1zM18 16h2v1h-2z" fill="#5a94f0"/>
<rect x="13" y="16" width="11" height="9" fill="#4d8cf2"/>
<path d="M14 16h1v1h-1zM18 16h1v1h-1zM22 16h1v1h-1zM13 19h1v1h-1zM13 22h1v1h-1zM17 24h1v1h-1z" fill="#5aa07a"/>
<rect x="14" y="18" width="9" height="6" fill="#fffff4"/>
<path d="M15 19h1v1h-1zM16 20h1v2h-1zM17 22h1v1h-1zM18 19h1v3h-1zM19 20h1v2h-1zM20 22h1v1h-1zM21 21h1v1h-1z" fill="#4a88f2"/>
</g>
<!-- buttons -->
<g shape-rendering="auto">
<rect x="624.5" y="9.5" width="31" height="17" rx="2.5" fill="url(#gmin)" stroke="#4c5a6b"/>
<rect x="625.5" y="10.5" width="29" height="15" rx="1.5" fill="none" stroke="#e4eef8" stroke-opacity="0.7"/>
<rect x="634.5" y="17.5" width="10" height="4" rx="1" fill="#f5f5f5" stroke="#3f4a57"/>
<rect x="658.5" y="9.5" width="31" height="17" rx="2.5" fill="url(#gmin)" stroke="#4c5a6b"/>
<rect x="659.5" y="10.5" width="29" height="15" rx="1.5" fill="none" stroke="#e4eef8" stroke-opacity="0.7"/>
<rect x="668.5" y="13.5" width="10" height="8" rx="1" fill="#f5f5f5" stroke="#3f4a57"/>
<rect x="671.5" y="16.5" width="4" height="2" fill="#8ba6c4" stroke="#3f4a57"/>
<rect x="692.5" y="9.5" width="31" height="17" rx="2.5" fill="url(#gclose)" stroke="#4a1a1e"/>
<rect x="693.5" y="10.5" width="29" height="15" rx="1.5" fill="none" stroke="#f7d0c6" stroke-opacity="0.6"/>
<path d="M704.6 15.2L711.2 19.6 M711.2 15.2L704.6 19.6" stroke="#3a3f52" stroke-width="4.4" stroke-linecap="square"/>
<path d="M704.6 15.2L711.2 19.6 M711.2 15.2L704.6 19.6" stroke="#f6f6f6" stroke-width="2.6" stroke-linecap="square"/>
</g>
</svg>
</body></html>
